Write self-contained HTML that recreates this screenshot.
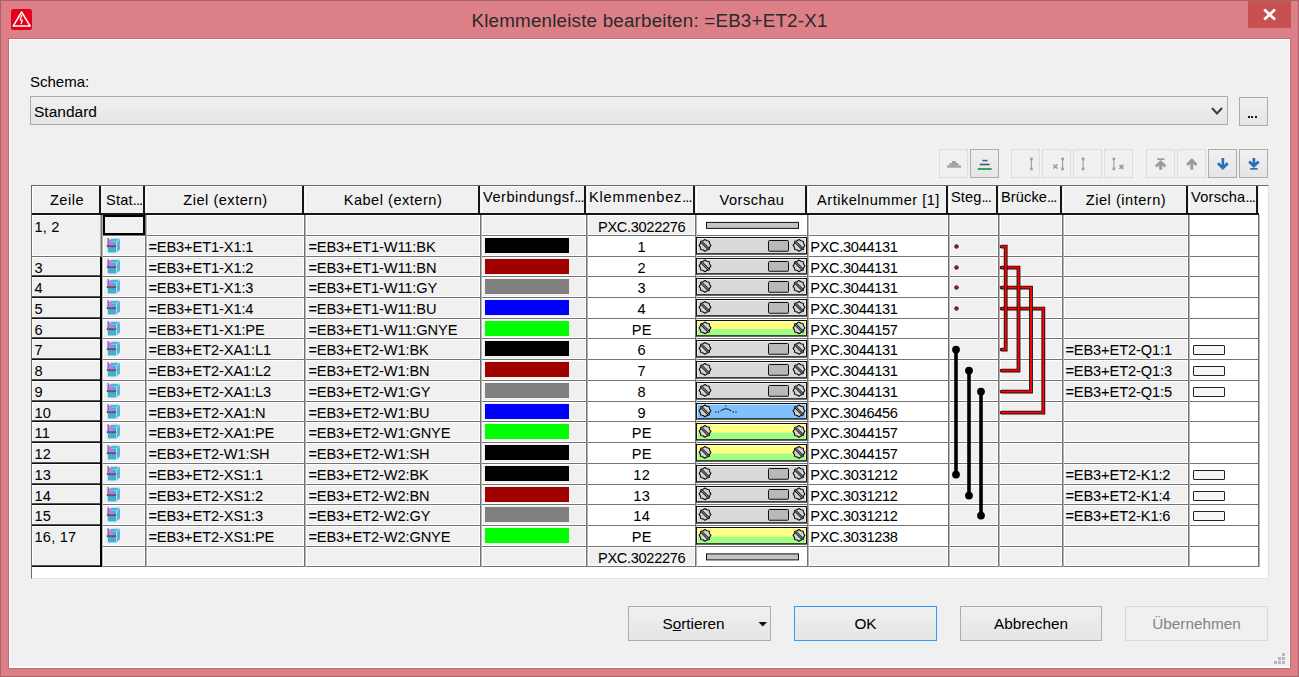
<!DOCTYPE html>
<html><head><meta charset="utf-8"><style>
*{margin:0;padding:0;box-sizing:border-box}
html,body{width:1299px;height:677px;overflow:hidden;background:#dd7f86;font-family:"Liberation Sans", sans-serif}
div{position:absolute}
.t{white-space:nowrap;line-height:1;-webkit-text-stroke:0.04px currentColor}
</style></head><body>

<div style="left:0px;top:0px;width:1299px;height:677px;border:1px solid #a9636a;"></div>
<svg style="position:absolute;left:11px;top:9px" width="21" height="21" viewBox="0 0 21 21">
<rect x="0" y="0" width="21" height="21" rx="2.5" fill="#e2001a"/>
<path d="M10.6 3.0 L19.2 17.1 L2.2 17.1 Z" fill="none" stroke="#fff" stroke-width="1.5" stroke-linejoin="round"/>
<path d="M10.8 6 L9.2 10.8 L11.3 11.4 L10 15.3" fill="none" stroke="#fff" stroke-width="1.2"/>
</svg>
<div class="t" style="left:349.5px;width:600px;text-align:center;top:12.09px;font-size:18.8px;color:#2a2a2a;letter-spacing:0.2px;-webkit-text-stroke:0;">Klemmenleiste bearbeiten: =EB3+ET2-X1</div>
<div style="left:1248px;top:1px;width:43px;height:27px;background:#c75050;"></div>
<svg style="position:absolute;left:1248px;top:1px" width="43" height="27" viewBox="0 0 43 27">
<path d="M16.2 8.6 L27 18.4 M27 8.6 L16.2 18.4" stroke="#fff" stroke-width="2.7"/>
</svg>
<div style="left:8px;top:38px;width:1283px;height:631px;border:1px solid #c96a73;background:#fff;"></div>
<div style="left:10px;top:40px;width:1279px;height:626px;background:#f0f0f0;"></div>
<div class="t" style="left:30px;top:74.20px;font-size:15px;color:#000;">Schema:</div>
<div style="left:30px;top:96px;width:1198px;height:29px;border:1px solid #acacac;background:linear-gradient(#f0f0f0,#e5e5e5);"></div>
<div class="t" style="left:34px;top:103.78px;font-size:15.5px;color:#000;">Standard</div>
<svg style="position:absolute;left:1210px;top:105px" width="14" height="12" viewBox="0 0 14 12">
<path d="M2 3 L7 8.5 L12 3" fill="none" stroke="#3c3c3c" stroke-width="2"/>
</svg>
<div style="left:1239px;top:97px;width:29px;height:29px;border:1px solid #acacac;background:linear-gradient(#f0f0f0,#e5e5e5);"></div>
<div style="left:1248.0px;top:116px;width:2px;height:2px;background:#1a1a1a;"></div>
<div style="left:1251.3px;top:116px;width:2px;height:2px;background:#1a1a1a;"></div>
<div style="left:1254.6px;top:116px;width:2px;height:2px;background:#1a1a1a;"></div>
<div style="left:939px;top:149px;width:29px;height:29px;border:1px solid #dcdcdc;background:#f0f0f0;"></div>
<div style="left:970px;top:149px;width:29px;height:29px;border:1px solid #adadad;background:linear-gradient(#f0f0f0,#e5e5e5);"></div>
<div style="left:1011px;top:149px;width:29px;height:29px;border:1px solid #dcdcdc;background:#f0f0f0;"></div>
<div style="left:1042px;top:149px;width:29px;height:29px;border:1px solid #dcdcdc;background:#f0f0f0;"></div>
<div style="left:1073px;top:149px;width:29px;height:29px;border:1px solid #dcdcdc;background:#f0f0f0;"></div>
<div style="left:1104px;top:149px;width:29px;height:29px;border:1px solid #dcdcdc;background:#f0f0f0;"></div>
<div style="left:1146px;top:149px;width:29px;height:29px;border:1px solid #dcdcdc;background:#f0f0f0;"></div>
<div style="left:1177px;top:149px;width:29px;height:29px;border:1px solid #dcdcdc;background:#f0f0f0;"></div>
<div style="left:1208px;top:149px;width:29px;height:29px;border:1px solid #adadad;background:linear-gradient(#f0f0f0,#e5e5e5);"></div>
<div style="left:1239px;top:149px;width:29px;height:29px;border:1px solid #adadad;background:linear-gradient(#f0f0f0,#e5e5e5);"></div>
<svg style="position:absolute;left:939px;top:149px" width="29" height="29" viewBox="0 0 29 29"><rect x="13" y="12" width="4" height="2.2" fill="#a0a0a0"/><rect x="10.5" y="14" width="9" height="2.6" fill="#a0a0a0"/><rect x="8" y="16.4" width="14" height="2.3" fill="#a0a0a0"/></svg>
<svg style="position:absolute;left:970px;top:149px" width="29" height="29" viewBox="0 0 29 29"><rect x="12.4" y="10.8" width="5.1" height="1.6" fill="#2b64b5"/><rect x="9.9" y="14.7" width="9.7" height="1.6" fill="#555"/><rect x="7.8" y="19" width="13.9" height="2" fill="#2fa36a"/></svg>
<svg style="position:absolute;left:1011px;top:149px" width="29" height="29" viewBox="0 0 29 29"><path d="M20.4 10 V20" stroke="#9c9c9c" stroke-width="1.1"/><rect x="19.099999999999998" y="8.6" width="2.6" height="2.6" fill="#9c9c9c"/><rect x="19.099999999999998" y="18.6" width="2.6" height="2.6" fill="#9c9c9c"/></svg>
<svg style="position:absolute;left:1042px;top:149px" width="29" height="29" viewBox="0 0 29 29"><path d="M20.6 10 V20" stroke="#9c9c9c" stroke-width="1.1"/><rect x="19.3" y="8.6" width="2.6" height="2.6" fill="#9c9c9c"/><rect x="19.3" y="18.6" width="2.6" height="2.6" fill="#9c9c9c"/><path d="M11.4 15.5 L15.4 19.5 M15.4 15.5 L11.4 19.5" stroke="#9c9c9c" stroke-width="1.7"/></svg>
<svg style="position:absolute;left:1073px;top:149px" width="29" height="29" viewBox="0 0 29 29"><path d="M10.1 10 V20" stroke="#9c9c9c" stroke-width="1.1"/><rect x="8.799999999999999" y="8.6" width="2.6" height="2.6" fill="#9c9c9c"/><rect x="8.799999999999999" y="18.6" width="2.6" height="2.6" fill="#9c9c9c"/></svg>
<svg style="position:absolute;left:1104px;top:149px" width="29" height="29" viewBox="0 0 29 29"><path d="M9.9 10 V20" stroke="#9c9c9c" stroke-width="1.1"/><rect x="8.6" y="8.6" width="2.6" height="2.6" fill="#9c9c9c"/><rect x="8.6" y="18.6" width="2.6" height="2.6" fill="#9c9c9c"/><path d="M15.5 15.8 L19.5 19.8 M19.5 15.8 L15.5 19.8" stroke="#9c9c9c" stroke-width="1.7"/></svg>
<svg style="position:absolute;left:1146px;top:149px" width="29" height="29" viewBox="0 0 29 29"><rect x="11.2" y="9.3" width="7.2" height="1.7" fill="#9a9a9a"/><path d="M14.7 13 V20.7" stroke="#9a9a9a" stroke-width="3"/><path d="M10 17.6 L14.7 12.9 L19.4 17.6" fill="none" stroke="#9a9a9a" stroke-width="2.8"/></svg>
<svg style="position:absolute;left:1177px;top:149px" width="29" height="29" viewBox="0 0 29 29"><path d="M14.8 10.5 V20.7" stroke="#9a9a9a" stroke-width="3"/><path d="M10.1 15.9 L14.8 11.2 L19.5 15.9" fill="none" stroke="#9a9a9a" stroke-width="2.8"/></svg>
<svg style="position:absolute;left:1208px;top:149px" width="29" height="29" viewBox="0 0 29 29"><path d="M14.85 9 V19" stroke="#2a6ebd" stroke-width="2.7"/><path d="M10 14.2 L14.85 19.1 L19.7 14.2" fill="none" stroke="#2a6ebd" stroke-width="2.8"/></svg>
<svg style="position:absolute;left:1239px;top:149px" width="29" height="29" viewBox="0 0 29 29"><path d="M14.9 9 V16.5" stroke="#2a6ebd" stroke-width="2.7"/><path d="M10.2 12.4 L14.9 17.1 L19.6 12.4" fill="none" stroke="#2a6ebd" stroke-width="2.8"/><rect x="11.2" y="19" width="7.4" height="1.7" fill="#2a6ebd"/></svg>
<div style="left:31px;top:185px;width:1238px;height:394px;background:#fff;border-top:1px solid #6a6a6a;border-left:1px solid #6a6a6a;border-right:1px solid #e3e3e3;border-bottom:1px solid #e3e3e3;"></div>
<div style="left:32px;top:186px;width:1227px;height:28px;background:#f0f0f0;"></div>
<div style="left:32px;top:186px;width:1px;height:27px;background:#fff;"></div>
<div style="left:32px;top:186px;width:68px;height:1px;background:#fff;"></div>
<div style="left:99px;top:186px;width:2px;height:28px;background:#161616;"></div>
<div class="t" style="left:-233.0px;width:600px;text-align:center;top:193.34px;font-size:14.6px;color:#000;letter-spacing:0.5px;">Zeile</div>
<div style="left:102px;top:186px;width:1px;height:27px;background:#fff;"></div>
<div style="left:102px;top:186px;width:42px;height:1px;background:#fff;"></div>
<div style="left:143px;top:186px;width:2px;height:28px;background:#161616;"></div>
<div class="t" style="left:106px;top:193.34px;font-size:14.6px;color:#000;letter-spacing:0.2px;">Stat<span style="letter-spacing:-0.9px">...</span></div>
<div style="left:146px;top:186px;width:1px;height:27px;background:#fff;"></div>
<div style="left:146px;top:186px;width:157px;height:1px;background:#fff;"></div>
<div style="left:302px;top:186px;width:2px;height:28px;background:#161616;"></div>
<div class="t" style="left:-74.5px;width:600px;text-align:center;top:193.34px;font-size:14.6px;color:#000;letter-spacing:0.5px;">Ziel (extern)</div>
<div style="left:305px;top:186px;width:1px;height:27px;background:#fff;"></div>
<div style="left:305px;top:186px;width:174px;height:1px;background:#fff;"></div>
<div style="left:478px;top:186px;width:2px;height:28px;background:#161616;"></div>
<div class="t" style="left:93.0px;width:600px;text-align:center;top:193.34px;font-size:14.6px;color:#000;letter-spacing:0.5px;">Kabel (extern)</div>
<div style="left:481px;top:186px;width:1px;height:27px;background:#fff;"></div>
<div style="left:481px;top:186px;width:104px;height:1px;background:#fff;"></div>
<div style="left:584px;top:186px;width:2px;height:28px;background:#161616;"></div>
<div class="t" style="left:483px;top:190.24px;font-size:14.6px;color:#000;letter-spacing:0.5px;">Verbindungsf<span style="letter-spacing:-0.9px">...</span></div>
<div style="left:587px;top:186px;width:1px;height:27px;background:#fff;"></div>
<div style="left:587px;top:186px;width:107px;height:1px;background:#fff;"></div>
<div style="left:693px;top:186px;width:2px;height:28px;background:#161616;"></div>
<div class="t" style="left:589px;top:190.24px;font-size:14.6px;color:#000;letter-spacing:0.8px;">Klemmenbez<span style="letter-spacing:-0.9px">...</span></div>
<div style="left:696px;top:186px;width:1px;height:27px;background:#fff;"></div>
<div style="left:696px;top:186px;width:110px;height:1px;background:#fff;"></div>
<div style="left:805px;top:186px;width:2px;height:28px;background:#161616;"></div>
<div class="t" style="left:452.0px;width:600px;text-align:center;top:193.34px;font-size:14.6px;color:#000;letter-spacing:0.5px;">Vorschau</div>
<div style="left:808px;top:186px;width:1px;height:27px;background:#fff;"></div>
<div style="left:808px;top:186px;width:139px;height:1px;background:#fff;"></div>
<div style="left:946px;top:186px;width:2px;height:28px;background:#161616;"></div>
<div class="t" style="left:578.5px;width:600px;text-align:center;top:193.34px;font-size:14.6px;color:#000;letter-spacing:0.5px;">Artikelnummer [1]</div>
<div style="left:949px;top:186px;width:1px;height:27px;background:#fff;"></div>
<div style="left:949px;top:186px;width:48px;height:1px;background:#fff;"></div>
<div style="left:996px;top:186px;width:2px;height:28px;background:#161616;"></div>
<div class="t" style="left:951px;top:190.24px;font-size:14.6px;color:#000;letter-spacing:0.1px;">Steg<span style="letter-spacing:-0.9px">...</span></div>
<div style="left:999px;top:186px;width:1px;height:27px;background:#fff;"></div>
<div style="left:999px;top:186px;width:62px;height:1px;background:#fff;"></div>
<div style="left:1060px;top:186px;width:2px;height:28px;background:#161616;"></div>
<div class="t" style="left:1001px;top:190.24px;font-size:14.6px;color:#000;letter-spacing:0.1px;">Brücke<span style="letter-spacing:-0.9px">...</span></div>
<div style="left:1063px;top:186px;width:1px;height:27px;background:#fff;"></div>
<div style="left:1063px;top:186px;width:124px;height:1px;background:#fff;"></div>
<div style="left:1186px;top:186px;width:2px;height:28px;background:#161616;"></div>
<div class="t" style="left:826.0px;width:600px;text-align:center;top:193.34px;font-size:14.6px;color:#000;letter-spacing:0.5px;">Ziel (intern)</div>
<div style="left:1189px;top:186px;width:1px;height:27px;background:#fff;"></div>
<div style="left:1189px;top:186px;width:68px;height:1px;background:#fff;"></div>
<div style="left:1256px;top:186px;width:2px;height:28px;background:#161616;"></div>
<div class="t" style="left:1191px;top:190.24px;font-size:14.6px;color:#000;letter-spacing:0.25px;">Vorscha<span style="letter-spacing:-0.9px">...</span></div>
<div style="left:32px;top:213px;width:1227px;height:2px;background:#161616;"></div>
<div style="left:101px;top:215px;width:1157px;height:351px;background:#fff;"></div>
<div style="left:104px;top:216px;width:40px;height:18px;background:#f0f0f0;"></div>
<div style="left:148px;top:216px;width:155px;height:18px;background:#f0f0f0;"></div>
<div style="left:307px;top:216px;width:172px;height:18px;background:#f0f0f0;"></div>
<div style="left:483px;top:216px;width:102px;height:18px;background:#f0f0f0;"></div>
<div style="left:589px;top:216px;width:105px;height:18px;background:#f0f0f0;"></div>
<div style="left:698px;top:216px;width:108px;height:18px;background:#fff;"></div>
<div style="left:810px;top:216px;width:137px;height:18px;background:#f0f0f0;"></div>
<div style="left:951px;top:216px;width:46px;height:18px;background:#f0f0f0;"></div>
<div style="left:1001px;top:216px;width:60px;height:18px;background:#f0f0f0;"></div>
<div style="left:1065px;top:216px;width:122px;height:18px;background:#f0f0f0;"></div>
<div style="left:1191px;top:216px;width:66px;height:18px;background:#fff;"></div>
<div style="left:104px;top:237px;width:40px;height:18px;background:#f0f0f0;"></div>
<div style="left:148px;top:237px;width:155px;height:18px;background:#f0f0f0;"></div>
<div style="left:307px;top:237px;width:172px;height:18px;background:#f0f0f0;"></div>
<div style="left:483px;top:237px;width:102px;height:18px;background:#f0f0f0;"></div>
<div style="left:589px;top:237px;width:105px;height:18px;background:#fff;"></div>
<div style="left:698px;top:237px;width:108px;height:18px;background:#fff;"></div>
<div style="left:810px;top:237px;width:137px;height:18px;background:#fff;"></div>
<div style="left:951px;top:237px;width:46px;height:18px;background:#f0f0f0;"></div>
<div style="left:1001px;top:237px;width:60px;height:18px;background:#f0f0f0;"></div>
<div style="left:1065px;top:237px;width:122px;height:18px;background:#f0f0f0;"></div>
<div style="left:1191px;top:237px;width:66px;height:18px;background:#fff;"></div>
<div style="left:104px;top:258px;width:40px;height:17px;background:#f0f0f0;"></div>
<div style="left:148px;top:258px;width:155px;height:17px;background:#f0f0f0;"></div>
<div style="left:307px;top:258px;width:172px;height:17px;background:#f0f0f0;"></div>
<div style="left:483px;top:258px;width:102px;height:17px;background:#f0f0f0;"></div>
<div style="left:589px;top:258px;width:105px;height:17px;background:#fff;"></div>
<div style="left:698px;top:258px;width:108px;height:17px;background:#fff;"></div>
<div style="left:810px;top:258px;width:137px;height:17px;background:#fff;"></div>
<div style="left:951px;top:258px;width:46px;height:17px;background:#f0f0f0;"></div>
<div style="left:1001px;top:258px;width:60px;height:17px;background:#f0f0f0;"></div>
<div style="left:1065px;top:258px;width:122px;height:17px;background:#f0f0f0;"></div>
<div style="left:1191px;top:258px;width:66px;height:17px;background:#fff;"></div>
<div style="left:104px;top:278px;width:40px;height:18px;background:#f0f0f0;"></div>
<div style="left:148px;top:278px;width:155px;height:18px;background:#f0f0f0;"></div>
<div style="left:307px;top:278px;width:172px;height:18px;background:#f0f0f0;"></div>
<div style="left:483px;top:278px;width:102px;height:18px;background:#f0f0f0;"></div>
<div style="left:589px;top:278px;width:105px;height:18px;background:#fff;"></div>
<div style="left:698px;top:278px;width:108px;height:18px;background:#fff;"></div>
<div style="left:810px;top:278px;width:137px;height:18px;background:#fff;"></div>
<div style="left:951px;top:278px;width:46px;height:18px;background:#f0f0f0;"></div>
<div style="left:1001px;top:278px;width:60px;height:18px;background:#f0f0f0;"></div>
<div style="left:1065px;top:278px;width:122px;height:18px;background:#f0f0f0;"></div>
<div style="left:1191px;top:278px;width:66px;height:18px;background:#fff;"></div>
<div style="left:104px;top:299px;width:40px;height:18px;background:#f0f0f0;"></div>
<div style="left:148px;top:299px;width:155px;height:18px;background:#f0f0f0;"></div>
<div style="left:307px;top:299px;width:172px;height:18px;background:#f0f0f0;"></div>
<div style="left:483px;top:299px;width:102px;height:18px;background:#f0f0f0;"></div>
<div style="left:589px;top:299px;width:105px;height:18px;background:#fff;"></div>
<div style="left:698px;top:299px;width:108px;height:18px;background:#fff;"></div>
<div style="left:810px;top:299px;width:137px;height:18px;background:#fff;"></div>
<div style="left:951px;top:299px;width:46px;height:18px;background:#f0f0f0;"></div>
<div style="left:1001px;top:299px;width:60px;height:18px;background:#f0f0f0;"></div>
<div style="left:1065px;top:299px;width:122px;height:18px;background:#f0f0f0;"></div>
<div style="left:1191px;top:299px;width:66px;height:18px;background:#fff;"></div>
<div style="left:104px;top:320px;width:40px;height:17px;background:#f0f0f0;"></div>
<div style="left:148px;top:320px;width:155px;height:17px;background:#f0f0f0;"></div>
<div style="left:307px;top:320px;width:172px;height:17px;background:#f0f0f0;"></div>
<div style="left:483px;top:320px;width:102px;height:17px;background:#f0f0f0;"></div>
<div style="left:589px;top:320px;width:105px;height:17px;background:#fff;"></div>
<div style="left:698px;top:320px;width:108px;height:17px;background:#fff;"></div>
<div style="left:810px;top:320px;width:137px;height:17px;background:#fff;"></div>
<div style="left:951px;top:320px;width:46px;height:17px;background:#f0f0f0;"></div>
<div style="left:1001px;top:320px;width:60px;height:17px;background:#f0f0f0;"></div>
<div style="left:1065px;top:320px;width:122px;height:17px;background:#f0f0f0;"></div>
<div style="left:1191px;top:320px;width:66px;height:17px;background:#fff;"></div>
<div style="left:104px;top:340px;width:40px;height:18px;background:#f0f0f0;"></div>
<div style="left:148px;top:340px;width:155px;height:18px;background:#f0f0f0;"></div>
<div style="left:307px;top:340px;width:172px;height:18px;background:#f0f0f0;"></div>
<div style="left:483px;top:340px;width:102px;height:18px;background:#f0f0f0;"></div>
<div style="left:589px;top:340px;width:105px;height:18px;background:#fff;"></div>
<div style="left:698px;top:340px;width:108px;height:18px;background:#fff;"></div>
<div style="left:810px;top:340px;width:137px;height:18px;background:#fff;"></div>
<div style="left:951px;top:340px;width:46px;height:18px;background:#f0f0f0;"></div>
<div style="left:1001px;top:340px;width:60px;height:18px;background:#f0f0f0;"></div>
<div style="left:1065px;top:340px;width:122px;height:18px;background:#f0f0f0;"></div>
<div style="left:1191px;top:340px;width:66px;height:18px;background:#fff;"></div>
<div style="left:104px;top:361px;width:40px;height:18px;background:#f0f0f0;"></div>
<div style="left:148px;top:361px;width:155px;height:18px;background:#f0f0f0;"></div>
<div style="left:307px;top:361px;width:172px;height:18px;background:#f0f0f0;"></div>
<div style="left:483px;top:361px;width:102px;height:18px;background:#f0f0f0;"></div>
<div style="left:589px;top:361px;width:105px;height:18px;background:#fff;"></div>
<div style="left:698px;top:361px;width:108px;height:18px;background:#fff;"></div>
<div style="left:810px;top:361px;width:137px;height:18px;background:#fff;"></div>
<div style="left:951px;top:361px;width:46px;height:18px;background:#f0f0f0;"></div>
<div style="left:1001px;top:361px;width:60px;height:18px;background:#f0f0f0;"></div>
<div style="left:1065px;top:361px;width:122px;height:18px;background:#f0f0f0;"></div>
<div style="left:1191px;top:361px;width:66px;height:18px;background:#fff;"></div>
<div style="left:104px;top:382px;width:40px;height:18px;background:#f0f0f0;"></div>
<div style="left:148px;top:382px;width:155px;height:18px;background:#f0f0f0;"></div>
<div style="left:307px;top:382px;width:172px;height:18px;background:#f0f0f0;"></div>
<div style="left:483px;top:382px;width:102px;height:18px;background:#f0f0f0;"></div>
<div style="left:589px;top:382px;width:105px;height:18px;background:#fff;"></div>
<div style="left:698px;top:382px;width:108px;height:18px;background:#fff;"></div>
<div style="left:810px;top:382px;width:137px;height:18px;background:#fff;"></div>
<div style="left:951px;top:382px;width:46px;height:18px;background:#f0f0f0;"></div>
<div style="left:1001px;top:382px;width:60px;height:18px;background:#f0f0f0;"></div>
<div style="left:1065px;top:382px;width:122px;height:18px;background:#f0f0f0;"></div>
<div style="left:1191px;top:382px;width:66px;height:18px;background:#fff;"></div>
<div style="left:104px;top:403px;width:40px;height:17px;background:#f0f0f0;"></div>
<div style="left:148px;top:403px;width:155px;height:17px;background:#f0f0f0;"></div>
<div style="left:307px;top:403px;width:172px;height:17px;background:#f0f0f0;"></div>
<div style="left:483px;top:403px;width:102px;height:17px;background:#f0f0f0;"></div>
<div style="left:589px;top:403px;width:105px;height:17px;background:#fff;"></div>
<div style="left:698px;top:403px;width:108px;height:17px;background:#fff;"></div>
<div style="left:810px;top:403px;width:137px;height:17px;background:#fff;"></div>
<div style="left:951px;top:403px;width:46px;height:17px;background:#f0f0f0;"></div>
<div style="left:1001px;top:403px;width:60px;height:17px;background:#f0f0f0;"></div>
<div style="left:1065px;top:403px;width:122px;height:17px;background:#f0f0f0;"></div>
<div style="left:1191px;top:403px;width:66px;height:17px;background:#fff;"></div>
<div style="left:104px;top:423px;width:40px;height:18px;background:#f0f0f0;"></div>
<div style="left:148px;top:423px;width:155px;height:18px;background:#f0f0f0;"></div>
<div style="left:307px;top:423px;width:172px;height:18px;background:#f0f0f0;"></div>
<div style="left:483px;top:423px;width:102px;height:18px;background:#f0f0f0;"></div>
<div style="left:589px;top:423px;width:105px;height:18px;background:#fff;"></div>
<div style="left:698px;top:423px;width:108px;height:18px;background:#fff;"></div>
<div style="left:810px;top:423px;width:137px;height:18px;background:#fff;"></div>
<div style="left:951px;top:423px;width:46px;height:18px;background:#f0f0f0;"></div>
<div style="left:1001px;top:423px;width:60px;height:18px;background:#f0f0f0;"></div>
<div style="left:1065px;top:423px;width:122px;height:18px;background:#f0f0f0;"></div>
<div style="left:1191px;top:423px;width:66px;height:18px;background:#fff;"></div>
<div style="left:104px;top:444px;width:40px;height:18px;background:#f0f0f0;"></div>
<div style="left:148px;top:444px;width:155px;height:18px;background:#f0f0f0;"></div>
<div style="left:307px;top:444px;width:172px;height:18px;background:#f0f0f0;"></div>
<div style="left:483px;top:444px;width:102px;height:18px;background:#f0f0f0;"></div>
<div style="left:589px;top:444px;width:105px;height:18px;background:#fff;"></div>
<div style="left:698px;top:444px;width:108px;height:18px;background:#fff;"></div>
<div style="left:810px;top:444px;width:137px;height:18px;background:#fff;"></div>
<div style="left:951px;top:444px;width:46px;height:18px;background:#f0f0f0;"></div>
<div style="left:1001px;top:444px;width:60px;height:18px;background:#f0f0f0;"></div>
<div style="left:1065px;top:444px;width:122px;height:18px;background:#f0f0f0;"></div>
<div style="left:1191px;top:444px;width:66px;height:18px;background:#fff;"></div>
<div style="left:104px;top:465px;width:40px;height:18px;background:#f0f0f0;"></div>
<div style="left:148px;top:465px;width:155px;height:18px;background:#f0f0f0;"></div>
<div style="left:307px;top:465px;width:172px;height:18px;background:#f0f0f0;"></div>
<div style="left:483px;top:465px;width:102px;height:18px;background:#f0f0f0;"></div>
<div style="left:589px;top:465px;width:105px;height:18px;background:#fff;"></div>
<div style="left:698px;top:465px;width:108px;height:18px;background:#fff;"></div>
<div style="left:810px;top:465px;width:137px;height:18px;background:#fff;"></div>
<div style="left:951px;top:465px;width:46px;height:18px;background:#f0f0f0;"></div>
<div style="left:1001px;top:465px;width:60px;height:18px;background:#f0f0f0;"></div>
<div style="left:1065px;top:465px;width:122px;height:18px;background:#f0f0f0;"></div>
<div style="left:1191px;top:465px;width:66px;height:18px;background:#fff;"></div>
<div style="left:104px;top:486px;width:40px;height:17px;background:#f0f0f0;"></div>
<div style="left:148px;top:486px;width:155px;height:17px;background:#f0f0f0;"></div>
<div style="left:307px;top:486px;width:172px;height:17px;background:#f0f0f0;"></div>
<div style="left:483px;top:486px;width:102px;height:17px;background:#f0f0f0;"></div>
<div style="left:589px;top:486px;width:105px;height:17px;background:#fff;"></div>
<div style="left:698px;top:486px;width:108px;height:17px;background:#fff;"></div>
<div style="left:810px;top:486px;width:137px;height:17px;background:#fff;"></div>
<div style="left:951px;top:486px;width:46px;height:17px;background:#f0f0f0;"></div>
<div style="left:1001px;top:486px;width:60px;height:17px;background:#f0f0f0;"></div>
<div style="left:1065px;top:486px;width:122px;height:17px;background:#f0f0f0;"></div>
<div style="left:1191px;top:486px;width:66px;height:17px;background:#fff;"></div>
<div style="left:104px;top:506px;width:40px;height:18px;background:#f0f0f0;"></div>
<div style="left:148px;top:506px;width:155px;height:18px;background:#f0f0f0;"></div>
<div style="left:307px;top:506px;width:172px;height:18px;background:#f0f0f0;"></div>
<div style="left:483px;top:506px;width:102px;height:18px;background:#f0f0f0;"></div>
<div style="left:589px;top:506px;width:105px;height:18px;background:#fff;"></div>
<div style="left:698px;top:506px;width:108px;height:18px;background:#fff;"></div>
<div style="left:810px;top:506px;width:137px;height:18px;background:#fff;"></div>
<div style="left:951px;top:506px;width:46px;height:18px;background:#f0f0f0;"></div>
<div style="left:1001px;top:506px;width:60px;height:18px;background:#f0f0f0;"></div>
<div style="left:1065px;top:506px;width:122px;height:18px;background:#f0f0f0;"></div>
<div style="left:1191px;top:506px;width:66px;height:18px;background:#fff;"></div>
<div style="left:104px;top:527px;width:40px;height:18px;background:#f0f0f0;"></div>
<div style="left:148px;top:527px;width:155px;height:18px;background:#f0f0f0;"></div>
<div style="left:307px;top:527px;width:172px;height:18px;background:#f0f0f0;"></div>
<div style="left:483px;top:527px;width:102px;height:18px;background:#f0f0f0;"></div>
<div style="left:589px;top:527px;width:105px;height:18px;background:#fff;"></div>
<div style="left:698px;top:527px;width:108px;height:18px;background:#fff;"></div>
<div style="left:810px;top:527px;width:137px;height:18px;background:#fff;"></div>
<div style="left:951px;top:527px;width:46px;height:18px;background:#f0f0f0;"></div>
<div style="left:1001px;top:527px;width:60px;height:18px;background:#f0f0f0;"></div>
<div style="left:1065px;top:527px;width:122px;height:18px;background:#f0f0f0;"></div>
<div style="left:1191px;top:527px;width:66px;height:18px;background:#fff;"></div>
<div style="left:104px;top:548px;width:40px;height:17px;background:#f0f0f0;"></div>
<div style="left:148px;top:548px;width:155px;height:17px;background:#f0f0f0;"></div>
<div style="left:307px;top:548px;width:172px;height:17px;background:#f0f0f0;"></div>
<div style="left:483px;top:548px;width:102px;height:17px;background:#f0f0f0;"></div>
<div style="left:589px;top:548px;width:105px;height:17px;background:#f0f0f0;"></div>
<div style="left:698px;top:548px;width:108px;height:17px;background:#fff;"></div>
<div style="left:810px;top:548px;width:137px;height:17px;background:#f0f0f0;"></div>
<div style="left:951px;top:548px;width:46px;height:17px;background:#f0f0f0;"></div>
<div style="left:1001px;top:548px;width:60px;height:17px;background:#f0f0f0;"></div>
<div style="left:1065px;top:548px;width:122px;height:17px;background:#f0f0f0;"></div>
<div style="left:1191px;top:548px;width:66px;height:17px;background:#fff;"></div>
<div style="left:101px;top:235px;width:1158px;height:1px;background:#737373;"></div>
<div style="left:101px;top:256px;width:1158px;height:1px;background:#737373;"></div>
<div style="left:101px;top:276px;width:1158px;height:1px;background:#737373;"></div>
<div style="left:101px;top:297px;width:1158px;height:1px;background:#737373;"></div>
<div style="left:101px;top:318px;width:1158px;height:1px;background:#737373;"></div>
<div style="left:101px;top:338px;width:1158px;height:1px;background:#737373;"></div>
<div style="left:101px;top:359px;width:1158px;height:1px;background:#737373;"></div>
<div style="left:101px;top:380px;width:1158px;height:1px;background:#737373;"></div>
<div style="left:101px;top:401px;width:1158px;height:1px;background:#737373;"></div>
<div style="left:101px;top:421px;width:1158px;height:1px;background:#737373;"></div>
<div style="left:101px;top:442px;width:1158px;height:1px;background:#737373;"></div>
<div style="left:101px;top:463px;width:1158px;height:1px;background:#737373;"></div>
<div style="left:101px;top:484px;width:1158px;height:1px;background:#737373;"></div>
<div style="left:101px;top:504px;width:1158px;height:1px;background:#737373;"></div>
<div style="left:101px;top:525px;width:1158px;height:1px;background:#737373;"></div>
<div style="left:101px;top:546px;width:1158px;height:1px;background:#737373;"></div>
<div style="left:101px;top:566px;width:1158px;height:1px;background:#737373;"></div>
<div style="left:101px;top:215px;width:1px;height:352px;background:#737373;"></div>
<div style="left:102px;top:215px;width:1px;height:352px;background:#b4b4b4;"></div>
<div style="left:145px;top:215px;width:1px;height:352px;background:#737373;"></div>
<div style="left:146px;top:215px;width:1px;height:352px;background:#b4b4b4;"></div>
<div style="left:304px;top:215px;width:1px;height:352px;background:#737373;"></div>
<div style="left:305px;top:215px;width:1px;height:352px;background:#b4b4b4;"></div>
<div style="left:480px;top:215px;width:1px;height:352px;background:#737373;"></div>
<div style="left:481px;top:215px;width:1px;height:352px;background:#b4b4b4;"></div>
<div style="left:586px;top:215px;width:1px;height:352px;background:#737373;"></div>
<div style="left:587px;top:215px;width:1px;height:352px;background:#b4b4b4;"></div>
<div style="left:695px;top:215px;width:1px;height:352px;background:#737373;"></div>
<div style="left:696px;top:215px;width:1px;height:352px;background:#b4b4b4;"></div>
<div style="left:807px;top:215px;width:1px;height:352px;background:#737373;"></div>
<div style="left:808px;top:215px;width:1px;height:352px;background:#b4b4b4;"></div>
<div style="left:948px;top:215px;width:1px;height:352px;background:#737373;"></div>
<div style="left:949px;top:215px;width:1px;height:352px;background:#b4b4b4;"></div>
<div style="left:998px;top:215px;width:1px;height:352px;background:#737373;"></div>
<div style="left:999px;top:215px;width:1px;height:352px;background:#b4b4b4;"></div>
<div style="left:1062px;top:215px;width:1px;height:352px;background:#737373;"></div>
<div style="left:1063px;top:215px;width:1px;height:352px;background:#b4b4b4;"></div>
<div style="left:1188px;top:215px;width:1px;height:352px;background:#737373;"></div>
<div style="left:1189px;top:215px;width:1px;height:352px;background:#b4b4b4;"></div>
<div style="left:1258px;top:215px;width:1px;height:352px;background:#737373;"></div>
<div style="left:1259px;top:215px;width:1px;height:352px;background:#b4b4b4;"></div>
<div style="left:32px;top:215px;width:69px;height:40px;background:#f0f0f0;"></div>
<div style="left:32px;top:215px;width:68px;height:1px;background:#fff;"></div>
<div style="left:32px;top:215px;width:1px;height:40px;background:#fff;"></div>
<div style="left:32px;top:256px;width:69px;height:1px;background:#737373;"></div>
<div style="left:100px;top:215px;width:1px;height:41px;background:#b4b4b4;"></div>
<div style="left:101px;top:215px;width:1px;height:41px;background:#737373;"></div>
<div class="t" style="left:34.5px;top:219.54px;font-size:14.6px;color:#000;letter-spacing:0.2px;">1, 2</div>
<div style="left:32px;top:257px;width:69px;height:18px;background:#f0f0f0;"></div>
<div style="left:32px;top:257px;width:68px;height:1px;background:#fff;"></div>
<div style="left:32px;top:257px;width:1px;height:18px;background:#fff;"></div>
<div style="left:32px;top:275px;width:70px;height:1px;background:#555;"></div>
<div style="left:32px;top:276px;width:70px;height:1px;background:#111;"></div>
<div style="left:100px;top:257px;width:2px;height:20px;background:#000;"></div>
<div class="t" style="left:34.5px;top:261.04px;font-size:14.6px;color:#000;letter-spacing:0.2px;">3</div>
<div style="left:32px;top:277px;width:69px;height:19px;background:#f0f0f0;"></div>
<div style="left:32px;top:277px;width:68px;height:1px;background:#fff;"></div>
<div style="left:32px;top:277px;width:1px;height:19px;background:#fff;"></div>
<div style="left:32px;top:296px;width:70px;height:1px;background:#555;"></div>
<div style="left:32px;top:297px;width:70px;height:1px;background:#111;"></div>
<div style="left:100px;top:277px;width:2px;height:21px;background:#000;"></div>
<div class="t" style="left:34.5px;top:281.04px;font-size:14.6px;color:#000;letter-spacing:0.2px;">4</div>
<div style="left:32px;top:298px;width:69px;height:19px;background:#f0f0f0;"></div>
<div style="left:32px;top:298px;width:68px;height:1px;background:#fff;"></div>
<div style="left:32px;top:298px;width:1px;height:19px;background:#fff;"></div>
<div style="left:32px;top:317px;width:70px;height:1px;background:#555;"></div>
<div style="left:32px;top:318px;width:70px;height:1px;background:#111;"></div>
<div style="left:100px;top:298px;width:2px;height:21px;background:#000;"></div>
<div class="t" style="left:34.5px;top:302.04px;font-size:14.6px;color:#000;letter-spacing:0.2px;">5</div>
<div style="left:32px;top:319px;width:69px;height:18px;background:#f0f0f0;"></div>
<div style="left:32px;top:319px;width:68px;height:1px;background:#fff;"></div>
<div style="left:32px;top:319px;width:1px;height:18px;background:#fff;"></div>
<div style="left:32px;top:337px;width:70px;height:1px;background:#555;"></div>
<div style="left:32px;top:338px;width:70px;height:1px;background:#111;"></div>
<div style="left:100px;top:319px;width:2px;height:20px;background:#000;"></div>
<div class="t" style="left:34.5px;top:323.04px;font-size:14.6px;color:#000;letter-spacing:0.2px;">6</div>
<div style="left:32px;top:339px;width:69px;height:19px;background:#f0f0f0;"></div>
<div style="left:32px;top:339px;width:68px;height:1px;background:#fff;"></div>
<div style="left:32px;top:339px;width:1px;height:19px;background:#fff;"></div>
<div style="left:32px;top:358px;width:70px;height:1px;background:#555;"></div>
<div style="left:32px;top:359px;width:70px;height:1px;background:#111;"></div>
<div style="left:100px;top:339px;width:2px;height:21px;background:#000;"></div>
<div class="t" style="left:34.5px;top:343.04px;font-size:14.6px;color:#000;letter-spacing:0.2px;">7</div>
<div style="left:32px;top:360px;width:69px;height:19px;background:#f0f0f0;"></div>
<div style="left:32px;top:360px;width:68px;height:1px;background:#fff;"></div>
<div style="left:32px;top:360px;width:1px;height:19px;background:#fff;"></div>
<div style="left:32px;top:379px;width:70px;height:1px;background:#555;"></div>
<div style="left:32px;top:380px;width:70px;height:1px;background:#111;"></div>
<div style="left:100px;top:360px;width:2px;height:21px;background:#000;"></div>
<div class="t" style="left:34.5px;top:364.04px;font-size:14.6px;color:#000;letter-spacing:0.2px;">8</div>
<div style="left:32px;top:381px;width:69px;height:19px;background:#f0f0f0;"></div>
<div style="left:32px;top:381px;width:68px;height:1px;background:#fff;"></div>
<div style="left:32px;top:381px;width:1px;height:19px;background:#fff;"></div>
<div style="left:32px;top:400px;width:70px;height:1px;background:#555;"></div>
<div style="left:32px;top:401px;width:70px;height:1px;background:#111;"></div>
<div style="left:100px;top:381px;width:2px;height:21px;background:#000;"></div>
<div class="t" style="left:34.5px;top:385.04px;font-size:14.6px;color:#000;letter-spacing:0.2px;">9</div>
<div style="left:32px;top:402px;width:69px;height:18px;background:#f0f0f0;"></div>
<div style="left:32px;top:402px;width:68px;height:1px;background:#fff;"></div>
<div style="left:32px;top:402px;width:1px;height:18px;background:#fff;"></div>
<div style="left:32px;top:420px;width:70px;height:1px;background:#555;"></div>
<div style="left:32px;top:421px;width:70px;height:1px;background:#111;"></div>
<div style="left:100px;top:402px;width:2px;height:20px;background:#000;"></div>
<div class="t" style="left:34.5px;top:406.04px;font-size:14.6px;color:#000;letter-spacing:0.2px;">10</div>
<div style="left:32px;top:422px;width:69px;height:19px;background:#f0f0f0;"></div>
<div style="left:32px;top:422px;width:68px;height:1px;background:#fff;"></div>
<div style="left:32px;top:422px;width:1px;height:19px;background:#fff;"></div>
<div style="left:32px;top:441px;width:70px;height:1px;background:#555;"></div>
<div style="left:32px;top:442px;width:70px;height:1px;background:#111;"></div>
<div style="left:100px;top:422px;width:2px;height:21px;background:#000;"></div>
<div class="t" style="left:34.5px;top:426.04px;font-size:14.6px;color:#000;letter-spacing:0.2px;">11</div>
<div style="left:32px;top:443px;width:69px;height:19px;background:#f0f0f0;"></div>
<div style="left:32px;top:443px;width:68px;height:1px;background:#fff;"></div>
<div style="left:32px;top:443px;width:1px;height:19px;background:#fff;"></div>
<div style="left:32px;top:462px;width:70px;height:1px;background:#555;"></div>
<div style="left:32px;top:463px;width:70px;height:1px;background:#111;"></div>
<div style="left:100px;top:443px;width:2px;height:21px;background:#000;"></div>
<div class="t" style="left:34.5px;top:447.04px;font-size:14.6px;color:#000;letter-spacing:0.2px;">12</div>
<div style="left:32px;top:464px;width:69px;height:19px;background:#f0f0f0;"></div>
<div style="left:32px;top:464px;width:68px;height:1px;background:#fff;"></div>
<div style="left:32px;top:464px;width:1px;height:19px;background:#fff;"></div>
<div style="left:32px;top:483px;width:70px;height:1px;background:#555;"></div>
<div style="left:32px;top:484px;width:70px;height:1px;background:#111;"></div>
<div style="left:100px;top:464px;width:2px;height:21px;background:#000;"></div>
<div class="t" style="left:34.5px;top:468.04px;font-size:14.6px;color:#000;letter-spacing:0.2px;">13</div>
<div style="left:32px;top:485px;width:69px;height:18px;background:#f0f0f0;"></div>
<div style="left:32px;top:485px;width:68px;height:1px;background:#fff;"></div>
<div style="left:32px;top:485px;width:1px;height:18px;background:#fff;"></div>
<div style="left:32px;top:503px;width:70px;height:1px;background:#555;"></div>
<div style="left:32px;top:504px;width:70px;height:1px;background:#111;"></div>
<div style="left:100px;top:485px;width:2px;height:20px;background:#000;"></div>
<div class="t" style="left:34.5px;top:489.04px;font-size:14.6px;color:#000;letter-spacing:0.2px;">14</div>
<div style="left:32px;top:505px;width:69px;height:19px;background:#f0f0f0;"></div>
<div style="left:32px;top:505px;width:68px;height:1px;background:#fff;"></div>
<div style="left:32px;top:505px;width:1px;height:19px;background:#fff;"></div>
<div style="left:32px;top:524px;width:70px;height:1px;background:#555;"></div>
<div style="left:32px;top:525px;width:70px;height:1px;background:#111;"></div>
<div style="left:100px;top:505px;width:2px;height:21px;background:#000;"></div>
<div class="t" style="left:34.5px;top:509.04px;font-size:14.6px;color:#000;letter-spacing:0.2px;">15</div>
<div style="left:32px;top:526px;width:69px;height:39px;background:#f0f0f0;"></div>
<div style="left:32px;top:526px;width:68px;height:1px;background:#fff;"></div>
<div style="left:32px;top:526px;width:1px;height:39px;background:#fff;"></div>
<div style="left:32px;top:565px;width:70px;height:1px;background:#555;"></div>
<div style="left:32px;top:566px;width:70px;height:1px;background:#111;"></div>
<div style="left:100px;top:526px;width:2px;height:41px;background:#000;"></div>
<div class="t" style="left:34.5px;top:530.04px;font-size:14.6px;color:#000;letter-spacing:0.2px;">16, 17</div>
<div style="left:103px;top:215px;width:42px;height:20px;border:2px solid #000;"></div>
<div class="t" style="left:341.70000000000005px;width:600px;text-align:center;top:219.54px;font-size:14.6px;color:#000;letter-spacing:-0.32px;">PXC.3022276</div>
<svg style="position:absolute;left:696px;top:216px" width="112" height="18" viewBox="0 0 112 18"><rect x="10.5" y="6.4" width="92" height="6" fill="#c4c4c4" stroke="#111" stroke-width="1"/></svg>
<svg style="position:absolute;left:104px;top:236px" width="20" height="20" viewBox="0 0 20 20">
<path d="M3.8 5.6 L12.4 5.6 L16 2.8 L7.4 2.8 Z" fill="#4fb3d9"/>
<path d="M12.4 5.6 L16 2.8 L16 13.5 L12.4 16.5 Z" fill="#55b5da"/>
<rect x="3.8" y="5.6" width="8.6" height="10.9" fill="#45acd4"/>
<path d="M12.4 5.8 L15.8 3 M12.6 5.8 V16.3" stroke="#d8f0f8" stroke-width="0.7" fill="none"/>
<path d="M4 2 L4 10 L11.5 10 Z" fill="#d070f0"/>
<path d="M4 2 L4 10" stroke="#6a3a80" stroke-width="0.8"/>
<circle cx="6.3" cy="7.4" r="0.9" fill="#40c0c8"/>
<rect x="2.8" y="9.4" width="9.4" height="1.7" fill="#4a4040"/><path d="M4.3 10.25 h1 M6.6 10.25 h1 M8.9 10.25 h1 M11.1 10.25 h0.8" stroke="#b8a8b8" stroke-width="0.7"/>
</svg>
<div class="t" style="left:148.4px;top:240.04px;font-size:14.6px;color:#000;letter-spacing:-0.1px;">=EB3+ET1-X1:1</div>
<div class="t" style="left:308.4px;top:240.04px;font-size:14.6px;color:#000;letter-spacing:-0.1px;">=EB3+ET1-W11:BK</div>
<div style="left:485px;top:238px;width:84px;height:15px;background:#000000;"></div>
<div class="t" style="left:341.70000000000005px;width:600px;text-align:center;top:240.04px;font-size:14.6px;color:#000;letter-spacing:0.2px;">1</div>
<svg style="position:absolute;left:696px;top:237px" width="112" height="18" viewBox="0 0 112 18"><rect x="1" y="1" width="109" height="16" fill="#d9d9d9"/><path d="M1.5 16 V1.5 H109.5 V16" fill="none" stroke="#fff" stroke-opacity="0.55" stroke-width="1"/><rect x="0.5" y="0.5" width="110" height="16.4" fill="none" stroke="#111" stroke-width="1"/><path d="M0.5 16.8 H110.5" stroke="#333" stroke-width="1.2"/><rect x="72.5" y="3.5" width="20" height="10.8" rx="1" fill="#b9b9b9" stroke="#111" stroke-width="1"/><path d="M73 14.4 H92" stroke="#444" stroke-width="1"/><polygon points="9.00,2.50 10.91,3.78 13.17,4.23 13.62,6.49 14.90,8.40 13.62,10.31 13.17,12.57 10.91,13.02 9.00,14.30 7.09,13.02 4.83,12.57 4.38,10.31 3.10,8.40 4.38,6.49 4.83,4.23 7.09,3.78" fill="#d2d2d2" stroke="#111" stroke-width="1.1" stroke-linejoin="round"/><path d="M5.40 4.80 L12.60 12.00" stroke="#222" stroke-width="2.6"/><path d="M5.60 5.00 L12.40 11.80" stroke="#ccc" stroke-width="0.7"/><polygon points="103.00,2.50 104.91,3.78 107.17,4.23 107.62,6.49 108.90,8.40 107.62,10.31 107.17,12.57 104.91,13.02 103.00,14.30 101.09,13.02 98.83,12.57 98.38,10.31 97.10,8.40 98.38,6.49 98.83,4.23 101.09,3.78" fill="#d2d2d2" stroke="#111" stroke-width="1.1" stroke-linejoin="round"/><path d="M99.40 4.80 L106.60 12.00" stroke="#222" stroke-width="2.6"/><path d="M99.60 5.00 L106.40 11.80" stroke="#ccc" stroke-width="0.7"/></svg>
<div class="t" style="left:810.3px;top:240.04px;font-size:14.6px;color:#000;letter-spacing:-0.32px;">PXC.3044131</div>
<svg style="position:absolute;left:952px;top:242px" width="9" height="9"><circle cx="4.5" cy="4.5" r="1.8" fill="#f00000" stroke="#1a2020" stroke-width="0.9"/></svg>
<svg style="position:absolute;left:104px;top:257px" width="20" height="20" viewBox="0 0 20 20">
<path d="M3.8 5.6 L12.4 5.6 L16 2.8 L7.4 2.8 Z" fill="#4fb3d9"/>
<path d="M12.4 5.6 L16 2.8 L16 13.5 L12.4 16.5 Z" fill="#55b5da"/>
<rect x="3.8" y="5.6" width="8.6" height="10.9" fill="#45acd4"/>
<path d="M12.4 5.8 L15.8 3 M12.6 5.8 V16.3" stroke="#d8f0f8" stroke-width="0.7" fill="none"/>
<path d="M4 2 L4 10 L11.5 10 Z" fill="#d070f0"/>
<path d="M4 2 L4 10" stroke="#6a3a80" stroke-width="0.8"/>
<circle cx="6.3" cy="7.4" r="0.9" fill="#40c0c8"/>
<rect x="2.8" y="9.4" width="9.4" height="1.7" fill="#4a4040"/><path d="M4.3 10.25 h1 M6.6 10.25 h1 M8.9 10.25 h1 M11.1 10.25 h0.8" stroke="#b8a8b8" stroke-width="0.7"/>
</svg>
<div class="t" style="left:148.4px;top:261.04px;font-size:14.6px;color:#000;letter-spacing:-0.1px;">=EB3+ET1-X1:2</div>
<div class="t" style="left:308.4px;top:261.04px;font-size:14.6px;color:#000;letter-spacing:-0.1px;">=EB3+ET1-W11:BN</div>
<div style="left:485px;top:259px;width:84px;height:15px;background:#a00000;"></div>
<div class="t" style="left:341.70000000000005px;width:600px;text-align:center;top:261.04px;font-size:14.6px;color:#000;letter-spacing:0.2px;">2</div>
<svg style="position:absolute;left:696px;top:258px" width="112" height="17" viewBox="0 0 112 17"><rect x="1" y="1" width="109" height="15" fill="#d9d9d9"/><path d="M1.5 15 V1.5 H109.5 V15" fill="none" stroke="#fff" stroke-opacity="0.55" stroke-width="1"/><rect x="0.5" y="0.5" width="110" height="15.4" fill="none" stroke="#111" stroke-width="1"/><path d="M0.5 15.8 H110.5" stroke="#333" stroke-width="1.2"/><rect x="72.5" y="3.5" width="20" height="9.8" rx="1" fill="#b9b9b9" stroke="#111" stroke-width="1"/><path d="M73 13.4 H92" stroke="#444" stroke-width="1"/><polygon points="9.00,2.00 10.91,3.28 13.17,3.73 13.62,5.99 14.90,7.90 13.62,9.81 13.17,12.07 10.91,12.52 9.00,13.80 7.09,12.52 4.83,12.07 4.38,9.81 3.10,7.90 4.38,5.99 4.83,3.73 7.09,3.28" fill="#d2d2d2" stroke="#111" stroke-width="1.1" stroke-linejoin="round"/><path d="M5.40 4.30 L12.60 11.50" stroke="#222" stroke-width="2.6"/><path d="M5.60 4.50 L12.40 11.30" stroke="#ccc" stroke-width="0.7"/><polygon points="103.00,2.00 104.91,3.28 107.17,3.73 107.62,5.99 108.90,7.90 107.62,9.81 107.17,12.07 104.91,12.52 103.00,13.80 101.09,12.52 98.83,12.07 98.38,9.81 97.10,7.90 98.38,5.99 98.83,3.73 101.09,3.28" fill="#d2d2d2" stroke="#111" stroke-width="1.1" stroke-linejoin="round"/><path d="M99.40 4.30 L106.60 11.50" stroke="#222" stroke-width="2.6"/><path d="M99.60 4.50 L106.40 11.30" stroke="#ccc" stroke-width="0.7"/></svg>
<div class="t" style="left:810.3px;top:261.04px;font-size:14.6px;color:#000;letter-spacing:-0.32px;">PXC.3044131</div>
<svg style="position:absolute;left:952px;top:263px" width="9" height="9"><circle cx="4.5" cy="4.5" r="1.8" fill="#f00000" stroke="#1a2020" stroke-width="0.9"/></svg>
<svg style="position:absolute;left:104px;top:277px" width="20" height="20" viewBox="0 0 20 20">
<path d="M3.8 5.6 L12.4 5.6 L16 2.8 L7.4 2.8 Z" fill="#4fb3d9"/>
<path d="M12.4 5.6 L16 2.8 L16 13.5 L12.4 16.5 Z" fill="#55b5da"/>
<rect x="3.8" y="5.6" width="8.6" height="10.9" fill="#45acd4"/>
<path d="M12.4 5.8 L15.8 3 M12.6 5.8 V16.3" stroke="#d8f0f8" stroke-width="0.7" fill="none"/>
<path d="M4 2 L4 10 L11.5 10 Z" fill="#d070f0"/>
<path d="M4 2 L4 10" stroke="#6a3a80" stroke-width="0.8"/>
<circle cx="6.3" cy="7.4" r="0.9" fill="#40c0c8"/>
<rect x="2.8" y="9.4" width="9.4" height="1.7" fill="#4a4040"/><path d="M4.3 10.25 h1 M6.6 10.25 h1 M8.9 10.25 h1 M11.1 10.25 h0.8" stroke="#b8a8b8" stroke-width="0.7"/>
</svg>
<div class="t" style="left:148.4px;top:281.04px;font-size:14.6px;color:#000;letter-spacing:-0.1px;">=EB3+ET1-X1:3</div>
<div class="t" style="left:308.4px;top:281.04px;font-size:14.6px;color:#000;letter-spacing:-0.1px;">=EB3+ET1-W11:GY</div>
<div style="left:485px;top:279px;width:84px;height:15px;background:#808080;"></div>
<div class="t" style="left:341.70000000000005px;width:600px;text-align:center;top:281.04px;font-size:14.6px;color:#000;letter-spacing:0.2px;">3</div>
<svg style="position:absolute;left:696px;top:278px" width="112" height="18" viewBox="0 0 112 18"><rect x="1" y="1" width="109" height="16" fill="#d9d9d9"/><path d="M1.5 16 V1.5 H109.5 V16" fill="none" stroke="#fff" stroke-opacity="0.55" stroke-width="1"/><rect x="0.5" y="0.5" width="110" height="16.4" fill="none" stroke="#111" stroke-width="1"/><path d="M0.5 16.8 H110.5" stroke="#333" stroke-width="1.2"/><rect x="72.5" y="3.5" width="20" height="10.8" rx="1" fill="#b9b9b9" stroke="#111" stroke-width="1"/><path d="M73 14.4 H92" stroke="#444" stroke-width="1"/><polygon points="9.00,2.50 10.91,3.78 13.17,4.23 13.62,6.49 14.90,8.40 13.62,10.31 13.17,12.57 10.91,13.02 9.00,14.30 7.09,13.02 4.83,12.57 4.38,10.31 3.10,8.40 4.38,6.49 4.83,4.23 7.09,3.78" fill="#d2d2d2" stroke="#111" stroke-width="1.1" stroke-linejoin="round"/><path d="M5.40 4.80 L12.60 12.00" stroke="#222" stroke-width="2.6"/><path d="M5.60 5.00 L12.40 11.80" stroke="#ccc" stroke-width="0.7"/><polygon points="103.00,2.50 104.91,3.78 107.17,4.23 107.62,6.49 108.90,8.40 107.62,10.31 107.17,12.57 104.91,13.02 103.00,14.30 101.09,13.02 98.83,12.57 98.38,10.31 97.10,8.40 98.38,6.49 98.83,4.23 101.09,3.78" fill="#d2d2d2" stroke="#111" stroke-width="1.1" stroke-linejoin="round"/><path d="M99.40 4.80 L106.60 12.00" stroke="#222" stroke-width="2.6"/><path d="M99.60 5.00 L106.40 11.80" stroke="#ccc" stroke-width="0.7"/></svg>
<div class="t" style="left:810.3px;top:281.04px;font-size:14.6px;color:#000;letter-spacing:-0.32px;">PXC.3044131</div>
<svg style="position:absolute;left:952px;top:283px" width="9" height="9"><circle cx="4.5" cy="4.5" r="1.8" fill="#f00000" stroke="#1a2020" stroke-width="0.9"/></svg>
<svg style="position:absolute;left:104px;top:298px" width="20" height="20" viewBox="0 0 20 20">
<path d="M3.8 5.6 L12.4 5.6 L16 2.8 L7.4 2.8 Z" fill="#4fb3d9"/>
<path d="M12.4 5.6 L16 2.8 L16 13.5 L12.4 16.5 Z" fill="#55b5da"/>
<rect x="3.8" y="5.6" width="8.6" height="10.9" fill="#45acd4"/>
<path d="M12.4 5.8 L15.8 3 M12.6 5.8 V16.3" stroke="#d8f0f8" stroke-width="0.7" fill="none"/>
<path d="M4 2 L4 10 L11.5 10 Z" fill="#d070f0"/>
<path d="M4 2 L4 10" stroke="#6a3a80" stroke-width="0.8"/>
<circle cx="6.3" cy="7.4" r="0.9" fill="#40c0c8"/>
<rect x="2.8" y="9.4" width="9.4" height="1.7" fill="#4a4040"/><path d="M4.3 10.25 h1 M6.6 10.25 h1 M8.9 10.25 h1 M11.1 10.25 h0.8" stroke="#b8a8b8" stroke-width="0.7"/>
</svg>
<div class="t" style="left:148.4px;top:302.04px;font-size:14.6px;color:#000;letter-spacing:-0.1px;">=EB3+ET1-X1:4</div>
<div class="t" style="left:308.4px;top:302.04px;font-size:14.6px;color:#000;letter-spacing:-0.1px;">=EB3+ET1-W11:BU</div>
<div style="left:485px;top:300px;width:84px;height:15px;background:#0000ff;"></div>
<div class="t" style="left:341.70000000000005px;width:600px;text-align:center;top:302.04px;font-size:14.6px;color:#000;letter-spacing:0.2px;">4</div>
<svg style="position:absolute;left:696px;top:299px" width="112" height="18" viewBox="0 0 112 18"><rect x="1" y="1" width="109" height="16" fill="#d9d9d9"/><path d="M1.5 16 V1.5 H109.5 V16" fill="none" stroke="#fff" stroke-opacity="0.55" stroke-width="1"/><rect x="0.5" y="0.5" width="110" height="16.4" fill="none" stroke="#111" stroke-width="1"/><path d="M0.5 16.8 H110.5" stroke="#333" stroke-width="1.2"/><rect x="72.5" y="3.5" width="20" height="10.8" rx="1" fill="#b9b9b9" stroke="#111" stroke-width="1"/><path d="M73 14.4 H92" stroke="#444" stroke-width="1"/><polygon points="9.00,2.50 10.91,3.78 13.17,4.23 13.62,6.49 14.90,8.40 13.62,10.31 13.17,12.57 10.91,13.02 9.00,14.30 7.09,13.02 4.83,12.57 4.38,10.31 3.10,8.40 4.38,6.49 4.83,4.23 7.09,3.78" fill="#d2d2d2" stroke="#111" stroke-width="1.1" stroke-linejoin="round"/><path d="M5.40 4.80 L12.60 12.00" stroke="#222" stroke-width="2.6"/><path d="M5.60 5.00 L12.40 11.80" stroke="#ccc" stroke-width="0.7"/><polygon points="103.00,2.50 104.91,3.78 107.17,4.23 107.62,6.49 108.90,8.40 107.62,10.31 107.17,12.57 104.91,13.02 103.00,14.30 101.09,13.02 98.83,12.57 98.38,10.31 97.10,8.40 98.38,6.49 98.83,4.23 101.09,3.78" fill="#d2d2d2" stroke="#111" stroke-width="1.1" stroke-linejoin="round"/><path d="M99.40 4.80 L106.60 12.00" stroke="#222" stroke-width="2.6"/><path d="M99.60 5.00 L106.40 11.80" stroke="#ccc" stroke-width="0.7"/></svg>
<div class="t" style="left:810.3px;top:302.04px;font-size:14.6px;color:#000;letter-spacing:-0.32px;">PXC.3044131</div>
<svg style="position:absolute;left:952px;top:304px" width="9" height="9"><circle cx="4.5" cy="4.5" r="1.8" fill="#f00000" stroke="#1a2020" stroke-width="0.9"/></svg>
<svg style="position:absolute;left:104px;top:319px" width="20" height="20" viewBox="0 0 20 20">
<path d="M3.8 5.6 L12.4 5.6 L16 2.8 L7.4 2.8 Z" fill="#4fb3d9"/>
<path d="M12.4 5.6 L16 2.8 L16 13.5 L12.4 16.5 Z" fill="#55b5da"/>
<rect x="3.8" y="5.6" width="8.6" height="10.9" fill="#45acd4"/>
<path d="M12.4 5.8 L15.8 3 M12.6 5.8 V16.3" stroke="#d8f0f8" stroke-width="0.7" fill="none"/>
<path d="M4 2 L4 10 L11.5 10 Z" fill="#d070f0"/>
<path d="M4 2 L4 10" stroke="#6a3a80" stroke-width="0.8"/>
<circle cx="6.3" cy="7.4" r="0.9" fill="#40c0c8"/>
<rect x="2.8" y="9.4" width="9.4" height="1.7" fill="#4a4040"/><path d="M4.3 10.25 h1 M6.6 10.25 h1 M8.9 10.25 h1 M11.1 10.25 h0.8" stroke="#b8a8b8" stroke-width="0.7"/>
</svg>
<div class="t" style="left:148.4px;top:323.04px;font-size:14.6px;color:#000;letter-spacing:-0.1px;">=EB3+ET1-X1:PE</div>
<div class="t" style="left:308.4px;top:323.04px;font-size:14.6px;color:#000;letter-spacing:-0.1px;">=EB3+ET1-W11:GNYE</div>
<div style="left:485px;top:321px;width:84px;height:15px;background:#00ff00;"></div>
<div class="t" style="left:341.70000000000005px;width:600px;text-align:center;top:323.04px;font-size:14.6px;color:#000;letter-spacing:0.2px;">PE</div>
<svg style="position:absolute;left:696px;top:320px" width="112" height="17" viewBox="0 0 112 17"><rect x="1" y="1" width="109" height="8.0" fill="#ffff80"/><rect x="1" y="9.0" width="109" height="6.5" fill="#a0ff80"/><path d="M1.5 15 V1.5 H109.5 V15" fill="none" stroke="#fff" stroke-opacity="0.55" stroke-width="1"/><rect x="0.5" y="0.5" width="110" height="15.4" fill="none" stroke="#111" stroke-width="1"/><path d="M0.5 15.8 H110.5" stroke="#333" stroke-width="1.2"/><polygon points="9.00,2.00 10.91,3.28 13.17,3.73 13.62,5.99 14.90,7.90 13.62,9.81 13.17,12.07 10.91,12.52 9.00,13.80 7.09,12.52 4.83,12.07 4.38,9.81 3.10,7.90 4.38,5.99 4.83,3.73 7.09,3.28" fill="#d2d2d2" stroke="#111" stroke-width="1.1" stroke-linejoin="round"/><path d="M5.40 4.30 L12.60 11.50" stroke="#222" stroke-width="2.6"/><path d="M5.60 4.50 L12.40 11.30" stroke="#ccc" stroke-width="0.7"/><polygon points="103.00,2.00 104.91,3.28 107.17,3.73 107.62,5.99 108.90,7.90 107.62,9.81 107.17,12.07 104.91,12.52 103.00,13.80 101.09,12.52 98.83,12.07 98.38,9.81 97.10,7.90 98.38,5.99 98.83,3.73 101.09,3.28" fill="#d2d2d2" stroke="#111" stroke-width="1.1" stroke-linejoin="round"/><path d="M99.40 4.30 L106.60 11.50" stroke="#222" stroke-width="2.6"/><path d="M99.60 4.50 L106.40 11.30" stroke="#ccc" stroke-width="0.7"/></svg>
<div class="t" style="left:810.3px;top:323.04px;font-size:14.6px;color:#000;letter-spacing:-0.32px;">PXC.3044157</div>
<svg style="position:absolute;left:104px;top:339px" width="20" height="20" viewBox="0 0 20 20">
<path d="M3.8 5.6 L12.4 5.6 L16 2.8 L7.4 2.8 Z" fill="#4fb3d9"/>
<path d="M12.4 5.6 L16 2.8 L16 13.5 L12.4 16.5 Z" fill="#55b5da"/>
<rect x="3.8" y="5.6" width="8.6" height="10.9" fill="#45acd4"/>
<path d="M12.4 5.8 L15.8 3 M12.6 5.8 V16.3" stroke="#d8f0f8" stroke-width="0.7" fill="none"/>
<path d="M4 2 L4 10 L11.5 10 Z" fill="#d070f0"/>
<path d="M4 2 L4 10" stroke="#6a3a80" stroke-width="0.8"/>
<circle cx="6.3" cy="7.4" r="0.9" fill="#40c0c8"/>
<rect x="2.8" y="9.4" width="9.4" height="1.7" fill="#4a4040"/><path d="M4.3 10.25 h1 M6.6 10.25 h1 M8.9 10.25 h1 M11.1 10.25 h0.8" stroke="#b8a8b8" stroke-width="0.7"/>
</svg>
<div class="t" style="left:148.4px;top:343.04px;font-size:14.6px;color:#000;letter-spacing:-0.1px;">=EB3+ET2-XA1:L1</div>
<div class="t" style="left:308.4px;top:343.04px;font-size:14.6px;color:#000;letter-spacing:-0.1px;">=EB3+ET2-W1:BK</div>
<div style="left:485px;top:341px;width:84px;height:15px;background:#000000;"></div>
<div class="t" style="left:341.70000000000005px;width:600px;text-align:center;top:343.04px;font-size:14.6px;color:#000;letter-spacing:0.2px;">6</div>
<svg style="position:absolute;left:696px;top:340px" width="112" height="18" viewBox="0 0 112 18"><rect x="1" y="1" width="109" height="16" fill="#d9d9d9"/><path d="M1.5 16 V1.5 H109.5 V16" fill="none" stroke="#fff" stroke-opacity="0.55" stroke-width="1"/><rect x="0.5" y="0.5" width="110" height="16.4" fill="none" stroke="#111" stroke-width="1"/><path d="M0.5 16.8 H110.5" stroke="#333" stroke-width="1.2"/><rect x="72.5" y="3.5" width="20" height="10.8" rx="1" fill="#b9b9b9" stroke="#111" stroke-width="1"/><path d="M73 14.4 H92" stroke="#444" stroke-width="1"/><polygon points="9.00,2.50 10.91,3.78 13.17,4.23 13.62,6.49 14.90,8.40 13.62,10.31 13.17,12.57 10.91,13.02 9.00,14.30 7.09,13.02 4.83,12.57 4.38,10.31 3.10,8.40 4.38,6.49 4.83,4.23 7.09,3.78" fill="#d2d2d2" stroke="#111" stroke-width="1.1" stroke-linejoin="round"/><path d="M5.40 4.80 L12.60 12.00" stroke="#222" stroke-width="2.6"/><path d="M5.60 5.00 L12.40 11.80" stroke="#ccc" stroke-width="0.7"/><polygon points="103.00,2.50 104.91,3.78 107.17,4.23 107.62,6.49 108.90,8.40 107.62,10.31 107.17,12.57 104.91,13.02 103.00,14.30 101.09,13.02 98.83,12.57 98.38,10.31 97.10,8.40 98.38,6.49 98.83,4.23 101.09,3.78" fill="#d2d2d2" stroke="#111" stroke-width="1.1" stroke-linejoin="round"/><path d="M99.40 4.80 L106.60 12.00" stroke="#222" stroke-width="2.6"/><path d="M99.60 5.00 L106.40 11.80" stroke="#ccc" stroke-width="0.7"/></svg>
<div class="t" style="left:810.3px;top:343.04px;font-size:14.6px;color:#000;letter-spacing:-0.32px;">PXC.3044131</div>
<div class="t" style="left:1065.4px;top:343.04px;font-size:14.6px;color:#000;letter-spacing:-0.1px;">=EB3+ET2-Q1:1</div>
<div style="left:1193px;top:345px;width:32px;height:10px;border:1.5px solid #222;border-radius:1px;background:#f6f6f6;"></div>
<svg style="position:absolute;left:104px;top:360px" width="20" height="20" viewBox="0 0 20 20">
<path d="M3.8 5.6 L12.4 5.6 L16 2.8 L7.4 2.8 Z" fill="#4fb3d9"/>
<path d="M12.4 5.6 L16 2.8 L16 13.5 L12.4 16.5 Z" fill="#55b5da"/>
<rect x="3.8" y="5.6" width="8.6" height="10.9" fill="#45acd4"/>
<path d="M12.4 5.8 L15.8 3 M12.6 5.8 V16.3" stroke="#d8f0f8" stroke-width="0.7" fill="none"/>
<path d="M4 2 L4 10 L11.5 10 Z" fill="#d070f0"/>
<path d="M4 2 L4 10" stroke="#6a3a80" stroke-width="0.8"/>
<circle cx="6.3" cy="7.4" r="0.9" fill="#40c0c8"/>
<rect x="2.8" y="9.4" width="9.4" height="1.7" fill="#4a4040"/><path d="M4.3 10.25 h1 M6.6 10.25 h1 M8.9 10.25 h1 M11.1 10.25 h0.8" stroke="#b8a8b8" stroke-width="0.7"/>
</svg>
<div class="t" style="left:148.4px;top:364.04px;font-size:14.6px;color:#000;letter-spacing:-0.1px;">=EB3+ET2-XA1:L2</div>
<div class="t" style="left:308.4px;top:364.04px;font-size:14.6px;color:#000;letter-spacing:-0.1px;">=EB3+ET2-W1:BN</div>
<div style="left:485px;top:362px;width:84px;height:15px;background:#a00000;"></div>
<div class="t" style="left:341.70000000000005px;width:600px;text-align:center;top:364.04px;font-size:14.6px;color:#000;letter-spacing:0.2px;">7</div>
<svg style="position:absolute;left:696px;top:361px" width="112" height="18" viewBox="0 0 112 18"><rect x="1" y="1" width="109" height="16" fill="#d9d9d9"/><path d="M1.5 16 V1.5 H109.5 V16" fill="none" stroke="#fff" stroke-opacity="0.55" stroke-width="1"/><rect x="0.5" y="0.5" width="110" height="16.4" fill="none" stroke="#111" stroke-width="1"/><path d="M0.5 16.8 H110.5" stroke="#333" stroke-width="1.2"/><rect x="72.5" y="3.5" width="20" height="10.8" rx="1" fill="#b9b9b9" stroke="#111" stroke-width="1"/><path d="M73 14.4 H92" stroke="#444" stroke-width="1"/><polygon points="9.00,2.50 10.91,3.78 13.17,4.23 13.62,6.49 14.90,8.40 13.62,10.31 13.17,12.57 10.91,13.02 9.00,14.30 7.09,13.02 4.83,12.57 4.38,10.31 3.10,8.40 4.38,6.49 4.83,4.23 7.09,3.78" fill="#d2d2d2" stroke="#111" stroke-width="1.1" stroke-linejoin="round"/><path d="M5.40 4.80 L12.60 12.00" stroke="#222" stroke-width="2.6"/><path d="M5.60 5.00 L12.40 11.80" stroke="#ccc" stroke-width="0.7"/><polygon points="103.00,2.50 104.91,3.78 107.17,4.23 107.62,6.49 108.90,8.40 107.62,10.31 107.17,12.57 104.91,13.02 103.00,14.30 101.09,13.02 98.83,12.57 98.38,10.31 97.10,8.40 98.38,6.49 98.83,4.23 101.09,3.78" fill="#d2d2d2" stroke="#111" stroke-width="1.1" stroke-linejoin="round"/><path d="M99.40 4.80 L106.60 12.00" stroke="#222" stroke-width="2.6"/><path d="M99.60 5.00 L106.40 11.80" stroke="#ccc" stroke-width="0.7"/></svg>
<div class="t" style="left:810.3px;top:364.04px;font-size:14.6px;color:#000;letter-spacing:-0.32px;">PXC.3044131</div>
<div class="t" style="left:1065.4px;top:364.04px;font-size:14.6px;color:#000;letter-spacing:-0.1px;">=EB3+ET2-Q1:3</div>
<div style="left:1193px;top:366px;width:32px;height:10px;border:1.5px solid #222;border-radius:1px;background:#f6f6f6;"></div>
<svg style="position:absolute;left:104px;top:381px" width="20" height="20" viewBox="0 0 20 20">
<path d="M3.8 5.6 L12.4 5.6 L16 2.8 L7.4 2.8 Z" fill="#4fb3d9"/>
<path d="M12.4 5.6 L16 2.8 L16 13.5 L12.4 16.5 Z" fill="#55b5da"/>
<rect x="3.8" y="5.6" width="8.6" height="10.9" fill="#45acd4"/>
<path d="M12.4 5.8 L15.8 3 M12.6 5.8 V16.3" stroke="#d8f0f8" stroke-width="0.7" fill="none"/>
<path d="M4 2 L4 10 L11.5 10 Z" fill="#d070f0"/>
<path d="M4 2 L4 10" stroke="#6a3a80" stroke-width="0.8"/>
<circle cx="6.3" cy="7.4" r="0.9" fill="#40c0c8"/>
<rect x="2.8" y="9.4" width="9.4" height="1.7" fill="#4a4040"/><path d="M4.3 10.25 h1 M6.6 10.25 h1 M8.9 10.25 h1 M11.1 10.25 h0.8" stroke="#b8a8b8" stroke-width="0.7"/>
</svg>
<div class="t" style="left:148.4px;top:385.04px;font-size:14.6px;color:#000;letter-spacing:-0.1px;">=EB3+ET2-XA1:L3</div>
<div class="t" style="left:308.4px;top:385.04px;font-size:14.6px;color:#000;letter-spacing:-0.1px;">=EB3+ET2-W1:GY</div>
<div style="left:485px;top:383px;width:84px;height:15px;background:#808080;"></div>
<div class="t" style="left:341.70000000000005px;width:600px;text-align:center;top:385.04px;font-size:14.6px;color:#000;letter-spacing:0.2px;">8</div>
<svg style="position:absolute;left:696px;top:382px" width="112" height="18" viewBox="0 0 112 18"><rect x="1" y="1" width="109" height="16" fill="#d9d9d9"/><path d="M1.5 16 V1.5 H109.5 V16" fill="none" stroke="#fff" stroke-opacity="0.55" stroke-width="1"/><rect x="0.5" y="0.5" width="110" height="16.4" fill="none" stroke="#111" stroke-width="1"/><path d="M0.5 16.8 H110.5" stroke="#333" stroke-width="1.2"/><rect x="72.5" y="3.5" width="20" height="10.8" rx="1" fill="#b9b9b9" stroke="#111" stroke-width="1"/><path d="M73 14.4 H92" stroke="#444" stroke-width="1"/><polygon points="9.00,2.50 10.91,3.78 13.17,4.23 13.62,6.49 14.90,8.40 13.62,10.31 13.17,12.57 10.91,13.02 9.00,14.30 7.09,13.02 4.83,12.57 4.38,10.31 3.10,8.40 4.38,6.49 4.83,4.23 7.09,3.78" fill="#d2d2d2" stroke="#111" stroke-width="1.1" stroke-linejoin="round"/><path d="M5.40 4.80 L12.60 12.00" stroke="#222" stroke-width="2.6"/><path d="M5.60 5.00 L12.40 11.80" stroke="#ccc" stroke-width="0.7"/><polygon points="103.00,2.50 104.91,3.78 107.17,4.23 107.62,6.49 108.90,8.40 107.62,10.31 107.17,12.57 104.91,13.02 103.00,14.30 101.09,13.02 98.83,12.57 98.38,10.31 97.10,8.40 98.38,6.49 98.83,4.23 101.09,3.78" fill="#d2d2d2" stroke="#111" stroke-width="1.1" stroke-linejoin="round"/><path d="M99.40 4.80 L106.60 12.00" stroke="#222" stroke-width="2.6"/><path d="M99.60 5.00 L106.40 11.80" stroke="#ccc" stroke-width="0.7"/></svg>
<div class="t" style="left:810.3px;top:385.04px;font-size:14.6px;color:#000;letter-spacing:-0.32px;">PXC.3044131</div>
<div class="t" style="left:1065.4px;top:385.04px;font-size:14.6px;color:#000;letter-spacing:-0.1px;">=EB3+ET2-Q1:5</div>
<div style="left:1193px;top:387px;width:32px;height:10px;border:1.5px solid #222;border-radius:1px;background:#f6f6f6;"></div>
<svg style="position:absolute;left:104px;top:402px" width="20" height="20" viewBox="0 0 20 20">
<path d="M3.8 5.6 L12.4 5.6 L16 2.8 L7.4 2.8 Z" fill="#4fb3d9"/>
<path d="M12.4 5.6 L16 2.8 L16 13.5 L12.4 16.5 Z" fill="#55b5da"/>
<rect x="3.8" y="5.6" width="8.6" height="10.9" fill="#45acd4"/>
<path d="M12.4 5.8 L15.8 3 M12.6 5.8 V16.3" stroke="#d8f0f8" stroke-width="0.7" fill="none"/>
<path d="M4 2 L4 10 L11.5 10 Z" fill="#d070f0"/>
<path d="M4 2 L4 10" stroke="#6a3a80" stroke-width="0.8"/>
<circle cx="6.3" cy="7.4" r="0.9" fill="#40c0c8"/>
<rect x="2.8" y="9.4" width="9.4" height="1.7" fill="#4a4040"/><path d="M4.3 10.25 h1 M6.6 10.25 h1 M8.9 10.25 h1 M11.1 10.25 h0.8" stroke="#b8a8b8" stroke-width="0.7"/>
</svg>
<div class="t" style="left:148.4px;top:406.04px;font-size:14.6px;color:#000;letter-spacing:-0.1px;">=EB3+ET2-XA1:N</div>
<div class="t" style="left:308.4px;top:406.04px;font-size:14.6px;color:#000;letter-spacing:-0.1px;">=EB3+ET2-W1:BU</div>
<div style="left:485px;top:404px;width:84px;height:15px;background:#0000ff;"></div>
<div class="t" style="left:341.70000000000005px;width:600px;text-align:center;top:406.04px;font-size:14.6px;color:#000;letter-spacing:0.2px;">9</div>
<svg style="position:absolute;left:696px;top:403px" width="112" height="17" viewBox="0 0 112 17"><rect x="1" y="1" width="109" height="15" fill="#80c0ff"/><path d="M1.5 15 V1.5 H109.5 V15" fill="none" stroke="#fff" stroke-opacity="0.55" stroke-width="1"/><rect x="0.5" y="0.5" width="110" height="15.4" fill="none" stroke="#111" stroke-width="1"/><path d="M0.5 15.8 H110.5" stroke="#333" stroke-width="1.2"/><path d="M19 9.0 h1.5 M21.8 9.0 h1.5 M36.5 9.0 h1.5 M39.2 9.0 h1.5" stroke="#111" stroke-width="1.2"/><path d="M24.5 8.0 Q29.8 3.5 35.2 8.0" fill="none" stroke="#111" stroke-width="1"/><path d="M29 2.5 l1.3 1" stroke="#111" stroke-width="0.9"/><polygon points="9.00,2.00 10.91,3.28 13.17,3.73 13.62,5.99 14.90,7.90 13.62,9.81 13.17,12.07 10.91,12.52 9.00,13.80 7.09,12.52 4.83,12.07 4.38,9.81 3.10,7.90 4.38,5.99 4.83,3.73 7.09,3.28" fill="#d2d2d2" stroke="#111" stroke-width="1.1" stroke-linejoin="round"/><path d="M5.40 4.30 L12.60 11.50" stroke="#222" stroke-width="2.6"/><path d="M5.60 4.50 L12.40 11.30" stroke="#ccc" stroke-width="0.7"/><polygon points="103.00,2.00 104.91,3.28 107.17,3.73 107.62,5.99 108.90,7.90 107.62,9.81 107.17,12.07 104.91,12.52 103.00,13.80 101.09,12.52 98.83,12.07 98.38,9.81 97.10,7.90 98.38,5.99 98.83,3.73 101.09,3.28" fill="#d2d2d2" stroke="#111" stroke-width="1.1" stroke-linejoin="round"/><path d="M99.40 4.30 L106.60 11.50" stroke="#222" stroke-width="2.6"/><path d="M99.60 4.50 L106.40 11.30" stroke="#ccc" stroke-width="0.7"/></svg>
<div class="t" style="left:810.3px;top:406.04px;font-size:14.6px;color:#000;letter-spacing:-0.32px;">PXC.3046456</div>
<svg style="position:absolute;left:104px;top:422px" width="20" height="20" viewBox="0 0 20 20">
<path d="M3.8 5.6 L12.4 5.6 L16 2.8 L7.4 2.8 Z" fill="#4fb3d9"/>
<path d="M12.4 5.6 L16 2.8 L16 13.5 L12.4 16.5 Z" fill="#55b5da"/>
<rect x="3.8" y="5.6" width="8.6" height="10.9" fill="#45acd4"/>
<path d="M12.4 5.8 L15.8 3 M12.6 5.8 V16.3" stroke="#d8f0f8" stroke-width="0.7" fill="none"/>
<path d="M4 2 L4 10 L11.5 10 Z" fill="#d070f0"/>
<path d="M4 2 L4 10" stroke="#6a3a80" stroke-width="0.8"/>
<circle cx="6.3" cy="7.4" r="0.9" fill="#40c0c8"/>
<rect x="2.8" y="9.4" width="9.4" height="1.7" fill="#4a4040"/><path d="M4.3 10.25 h1 M6.6 10.25 h1 M8.9 10.25 h1 M11.1 10.25 h0.8" stroke="#b8a8b8" stroke-width="0.7"/>
</svg>
<div class="t" style="left:148.4px;top:426.04px;font-size:14.6px;color:#000;letter-spacing:-0.1px;">=EB3+ET2-XA1:PE</div>
<div class="t" style="left:308.4px;top:426.04px;font-size:14.6px;color:#000;letter-spacing:-0.1px;">=EB3+ET2-W1:GNYE</div>
<div style="left:485px;top:424px;width:84px;height:15px;background:#00ff00;"></div>
<div class="t" style="left:341.70000000000005px;width:600px;text-align:center;top:426.04px;font-size:14.6px;color:#000;letter-spacing:0.2px;">PE</div>
<svg style="position:absolute;left:696px;top:423px" width="112" height="18" viewBox="0 0 112 18"><rect x="1" y="1" width="109" height="8.5" fill="#ffff80"/><rect x="1" y="9.5" width="109" height="7.0" fill="#a0ff80"/><path d="M1.5 16 V1.5 H109.5 V16" fill="none" stroke="#fff" stroke-opacity="0.55" stroke-width="1"/><rect x="0.5" y="0.5" width="110" height="16.4" fill="none" stroke="#111" stroke-width="1"/><path d="M0.5 16.8 H110.5" stroke="#333" stroke-width="1.2"/><polygon points="9.00,2.50 10.91,3.78 13.17,4.23 13.62,6.49 14.90,8.40 13.62,10.31 13.17,12.57 10.91,13.02 9.00,14.30 7.09,13.02 4.83,12.57 4.38,10.31 3.10,8.40 4.38,6.49 4.83,4.23 7.09,3.78" fill="#d2d2d2" stroke="#111" stroke-width="1.1" stroke-linejoin="round"/><path d="M5.40 4.80 L12.60 12.00" stroke="#222" stroke-width="2.6"/><path d="M5.60 5.00 L12.40 11.80" stroke="#ccc" stroke-width="0.7"/><polygon points="103.00,2.50 104.91,3.78 107.17,4.23 107.62,6.49 108.90,8.40 107.62,10.31 107.17,12.57 104.91,13.02 103.00,14.30 101.09,13.02 98.83,12.57 98.38,10.31 97.10,8.40 98.38,6.49 98.83,4.23 101.09,3.78" fill="#d2d2d2" stroke="#111" stroke-width="1.1" stroke-linejoin="round"/><path d="M99.40 4.80 L106.60 12.00" stroke="#222" stroke-width="2.6"/><path d="M99.60 5.00 L106.40 11.80" stroke="#ccc" stroke-width="0.7"/></svg>
<div class="t" style="left:810.3px;top:426.04px;font-size:14.6px;color:#000;letter-spacing:-0.32px;">PXC.3044157</div>
<svg style="position:absolute;left:104px;top:443px" width="20" height="20" viewBox="0 0 20 20">
<path d="M3.8 5.6 L12.4 5.6 L16 2.8 L7.4 2.8 Z" fill="#4fb3d9"/>
<path d="M12.4 5.6 L16 2.8 L16 13.5 L12.4 16.5 Z" fill="#55b5da"/>
<rect x="3.8" y="5.6" width="8.6" height="10.9" fill="#45acd4"/>
<path d="M12.4 5.8 L15.8 3 M12.6 5.8 V16.3" stroke="#d8f0f8" stroke-width="0.7" fill="none"/>
<path d="M4 2 L4 10 L11.5 10 Z" fill="#d070f0"/>
<path d="M4 2 L4 10" stroke="#6a3a80" stroke-width="0.8"/>
<circle cx="6.3" cy="7.4" r="0.9" fill="#40c0c8"/>
<rect x="2.8" y="9.4" width="9.4" height="1.7" fill="#4a4040"/><path d="M4.3 10.25 h1 M6.6 10.25 h1 M8.9 10.25 h1 M11.1 10.25 h0.8" stroke="#b8a8b8" stroke-width="0.7"/>
</svg>
<div class="t" style="left:148.4px;top:447.04px;font-size:14.6px;color:#000;letter-spacing:-0.1px;">=EB3+ET2-W1:SH</div>
<div class="t" style="left:308.4px;top:447.04px;font-size:14.6px;color:#000;letter-spacing:-0.1px;">=EB3+ET2-W1:SH</div>
<div style="left:485px;top:445px;width:84px;height:15px;background:#000000;"></div>
<div class="t" style="left:341.70000000000005px;width:600px;text-align:center;top:447.04px;font-size:14.6px;color:#000;letter-spacing:0.2px;">PE</div>
<svg style="position:absolute;left:696px;top:444px" width="112" height="18" viewBox="0 0 112 18"><rect x="1" y="1" width="109" height="8.5" fill="#ffff80"/><rect x="1" y="9.5" width="109" height="7.0" fill="#a0ff80"/><path d="M1.5 16 V1.5 H109.5 V16" fill="none" stroke="#fff" stroke-opacity="0.55" stroke-width="1"/><rect x="0.5" y="0.5" width="110" height="16.4" fill="none" stroke="#111" stroke-width="1"/><path d="M0.5 16.8 H110.5" stroke="#333" stroke-width="1.2"/><polygon points="9.00,2.50 10.91,3.78 13.17,4.23 13.62,6.49 14.90,8.40 13.62,10.31 13.17,12.57 10.91,13.02 9.00,14.30 7.09,13.02 4.83,12.57 4.38,10.31 3.10,8.40 4.38,6.49 4.83,4.23 7.09,3.78" fill="#d2d2d2" stroke="#111" stroke-width="1.1" stroke-linejoin="round"/><path d="M5.40 4.80 L12.60 12.00" stroke="#222" stroke-width="2.6"/><path d="M5.60 5.00 L12.40 11.80" stroke="#ccc" stroke-width="0.7"/><polygon points="103.00,2.50 104.91,3.78 107.17,4.23 107.62,6.49 108.90,8.40 107.62,10.31 107.17,12.57 104.91,13.02 103.00,14.30 101.09,13.02 98.83,12.57 98.38,10.31 97.10,8.40 98.38,6.49 98.83,4.23 101.09,3.78" fill="#d2d2d2" stroke="#111" stroke-width="1.1" stroke-linejoin="round"/><path d="M99.40 4.80 L106.60 12.00" stroke="#222" stroke-width="2.6"/><path d="M99.60 5.00 L106.40 11.80" stroke="#ccc" stroke-width="0.7"/></svg>
<div class="t" style="left:810.3px;top:447.04px;font-size:14.6px;color:#000;letter-spacing:-0.32px;">PXC.3044157</div>
<svg style="position:absolute;left:104px;top:464px" width="20" height="20" viewBox="0 0 20 20">
<path d="M3.8 5.6 L12.4 5.6 L16 2.8 L7.4 2.8 Z" fill="#4fb3d9"/>
<path d="M12.4 5.6 L16 2.8 L16 13.5 L12.4 16.5 Z" fill="#55b5da"/>
<rect x="3.8" y="5.6" width="8.6" height="10.9" fill="#45acd4"/>
<path d="M12.4 5.8 L15.8 3 M12.6 5.8 V16.3" stroke="#d8f0f8" stroke-width="0.7" fill="none"/>
<path d="M4 2 L4 10 L11.5 10 Z" fill="#d070f0"/>
<path d="M4 2 L4 10" stroke="#6a3a80" stroke-width="0.8"/>
<circle cx="6.3" cy="7.4" r="0.9" fill="#40c0c8"/>
<rect x="2.8" y="9.4" width="9.4" height="1.7" fill="#4a4040"/><path d="M4.3 10.25 h1 M6.6 10.25 h1 M8.9 10.25 h1 M11.1 10.25 h0.8" stroke="#b8a8b8" stroke-width="0.7"/>
</svg>
<div class="t" style="left:148.4px;top:468.04px;font-size:14.6px;color:#000;letter-spacing:-0.1px;">=EB3+ET2-XS1:1</div>
<div class="t" style="left:308.4px;top:468.04px;font-size:14.6px;color:#000;letter-spacing:-0.1px;">=EB3+ET2-W2:BK</div>
<div style="left:485px;top:466px;width:84px;height:15px;background:#000000;"></div>
<div class="t" style="left:341.70000000000005px;width:600px;text-align:center;top:468.04px;font-size:14.6px;color:#000;letter-spacing:0.2px;">12</div>
<svg style="position:absolute;left:696px;top:465px" width="112" height="18" viewBox="0 0 112 18"><rect x="1" y="1" width="109" height="16" fill="#d9d9d9"/><path d="M1.5 16 V1.5 H109.5 V16" fill="none" stroke="#fff" stroke-opacity="0.55" stroke-width="1"/><rect x="0.5" y="0.5" width="110" height="16.4" fill="none" stroke="#111" stroke-width="1"/><path d="M0.5 16.8 H110.5" stroke="#333" stroke-width="1.2"/><rect x="72.5" y="3.5" width="20" height="10.8" rx="1" fill="#b9b9b9" stroke="#111" stroke-width="1"/><path d="M73 14.4 H92" stroke="#444" stroke-width="1"/><polygon points="9.00,2.50 10.91,3.78 13.17,4.23 13.62,6.49 14.90,8.40 13.62,10.31 13.17,12.57 10.91,13.02 9.00,14.30 7.09,13.02 4.83,12.57 4.38,10.31 3.10,8.40 4.38,6.49 4.83,4.23 7.09,3.78" fill="#d2d2d2" stroke="#111" stroke-width="1.1" stroke-linejoin="round"/><path d="M5.40 4.80 L12.60 12.00" stroke="#222" stroke-width="2.6"/><path d="M5.60 5.00 L12.40 11.80" stroke="#ccc" stroke-width="0.7"/><polygon points="103.00,2.50 104.91,3.78 107.17,4.23 107.62,6.49 108.90,8.40 107.62,10.31 107.17,12.57 104.91,13.02 103.00,14.30 101.09,13.02 98.83,12.57 98.38,10.31 97.10,8.40 98.38,6.49 98.83,4.23 101.09,3.78" fill="#d2d2d2" stroke="#111" stroke-width="1.1" stroke-linejoin="round"/><path d="M99.40 4.80 L106.60 12.00" stroke="#222" stroke-width="2.6"/><path d="M99.60 5.00 L106.40 11.80" stroke="#ccc" stroke-width="0.7"/></svg>
<div class="t" style="left:810.3px;top:468.04px;font-size:14.6px;color:#000;letter-spacing:-0.32px;">PXC.3031212</div>
<div class="t" style="left:1065.4px;top:468.04px;font-size:14.6px;color:#000;letter-spacing:-0.1px;">=EB3+ET2-K1:2</div>
<div style="left:1193px;top:470px;width:32px;height:10px;border:1.5px solid #222;border-radius:1px;background:#f6f6f6;"></div>
<svg style="position:absolute;left:104px;top:485px" width="20" height="20" viewBox="0 0 20 20">
<path d="M3.8 5.6 L12.4 5.6 L16 2.8 L7.4 2.8 Z" fill="#4fb3d9"/>
<path d="M12.4 5.6 L16 2.8 L16 13.5 L12.4 16.5 Z" fill="#55b5da"/>
<rect x="3.8" y="5.6" width="8.6" height="10.9" fill="#45acd4"/>
<path d="M12.4 5.8 L15.8 3 M12.6 5.8 V16.3" stroke="#d8f0f8" stroke-width="0.7" fill="none"/>
<path d="M4 2 L4 10 L11.5 10 Z" fill="#d070f0"/>
<path d="M4 2 L4 10" stroke="#6a3a80" stroke-width="0.8"/>
<circle cx="6.3" cy="7.4" r="0.9" fill="#40c0c8"/>
<rect x="2.8" y="9.4" width="9.4" height="1.7" fill="#4a4040"/><path d="M4.3 10.25 h1 M6.6 10.25 h1 M8.9 10.25 h1 M11.1 10.25 h0.8" stroke="#b8a8b8" stroke-width="0.7"/>
</svg>
<div class="t" style="left:148.4px;top:489.04px;font-size:14.6px;color:#000;letter-spacing:-0.1px;">=EB3+ET2-XS1:2</div>
<div class="t" style="left:308.4px;top:489.04px;font-size:14.6px;color:#000;letter-spacing:-0.1px;">=EB3+ET2-W2:BN</div>
<div style="left:485px;top:487px;width:84px;height:15px;background:#a00000;"></div>
<div class="t" style="left:341.70000000000005px;width:600px;text-align:center;top:489.04px;font-size:14.6px;color:#000;letter-spacing:0.2px;">13</div>
<svg style="position:absolute;left:696px;top:486px" width="112" height="17" viewBox="0 0 112 17"><rect x="1" y="1" width="109" height="15" fill="#d9d9d9"/><path d="M1.5 15 V1.5 H109.5 V15" fill="none" stroke="#fff" stroke-opacity="0.55" stroke-width="1"/><rect x="0.5" y="0.5" width="110" height="15.4" fill="none" stroke="#111" stroke-width="1"/><path d="M0.5 15.8 H110.5" stroke="#333" stroke-width="1.2"/><rect x="72.5" y="3.5" width="20" height="9.8" rx="1" fill="#b9b9b9" stroke="#111" stroke-width="1"/><path d="M73 13.4 H92" stroke="#444" stroke-width="1"/><polygon points="9.00,2.00 10.91,3.28 13.17,3.73 13.62,5.99 14.90,7.90 13.62,9.81 13.17,12.07 10.91,12.52 9.00,13.80 7.09,12.52 4.83,12.07 4.38,9.81 3.10,7.90 4.38,5.99 4.83,3.73 7.09,3.28" fill="#d2d2d2" stroke="#111" stroke-width="1.1" stroke-linejoin="round"/><path d="M5.40 4.30 L12.60 11.50" stroke="#222" stroke-width="2.6"/><path d="M5.60 4.50 L12.40 11.30" stroke="#ccc" stroke-width="0.7"/><polygon points="103.00,2.00 104.91,3.28 107.17,3.73 107.62,5.99 108.90,7.90 107.62,9.81 107.17,12.07 104.91,12.52 103.00,13.80 101.09,12.52 98.83,12.07 98.38,9.81 97.10,7.90 98.38,5.99 98.83,3.73 101.09,3.28" fill="#d2d2d2" stroke="#111" stroke-width="1.1" stroke-linejoin="round"/><path d="M99.40 4.30 L106.60 11.50" stroke="#222" stroke-width="2.6"/><path d="M99.60 4.50 L106.40 11.30" stroke="#ccc" stroke-width="0.7"/></svg>
<div class="t" style="left:810.3px;top:489.04px;font-size:14.6px;color:#000;letter-spacing:-0.32px;">PXC.3031212</div>
<div class="t" style="left:1065.4px;top:489.04px;font-size:14.6px;color:#000;letter-spacing:-0.1px;">=EB3+ET2-K1:4</div>
<div style="left:1193px;top:491px;width:32px;height:10px;border:1.5px solid #222;border-radius:1px;background:#f6f6f6;"></div>
<svg style="position:absolute;left:104px;top:505px" width="20" height="20" viewBox="0 0 20 20">
<path d="M3.8 5.6 L12.4 5.6 L16 2.8 L7.4 2.8 Z" fill="#4fb3d9"/>
<path d="M12.4 5.6 L16 2.8 L16 13.5 L12.4 16.5 Z" fill="#55b5da"/>
<rect x="3.8" y="5.6" width="8.6" height="10.9" fill="#45acd4"/>
<path d="M12.4 5.8 L15.8 3 M12.6 5.8 V16.3" stroke="#d8f0f8" stroke-width="0.7" fill="none"/>
<path d="M4 2 L4 10 L11.5 10 Z" fill="#d070f0"/>
<path d="M4 2 L4 10" stroke="#6a3a80" stroke-width="0.8"/>
<circle cx="6.3" cy="7.4" r="0.9" fill="#40c0c8"/>
<rect x="2.8" y="9.4" width="9.4" height="1.7" fill="#4a4040"/><path d="M4.3 10.25 h1 M6.6 10.25 h1 M8.9 10.25 h1 M11.1 10.25 h0.8" stroke="#b8a8b8" stroke-width="0.7"/>
</svg>
<div class="t" style="left:148.4px;top:509.04px;font-size:14.6px;color:#000;letter-spacing:-0.1px;">=EB3+ET2-XS1:3</div>
<div class="t" style="left:308.4px;top:509.04px;font-size:14.6px;color:#000;letter-spacing:-0.1px;">=EB3+ET2-W2:GY</div>
<div style="left:485px;top:507px;width:84px;height:15px;background:#808080;"></div>
<div class="t" style="left:341.70000000000005px;width:600px;text-align:center;top:509.04px;font-size:14.6px;color:#000;letter-spacing:0.2px;">14</div>
<svg style="position:absolute;left:696px;top:506px" width="112" height="18" viewBox="0 0 112 18"><rect x="1" y="1" width="109" height="16" fill="#d9d9d9"/><path d="M1.5 16 V1.5 H109.5 V16" fill="none" stroke="#fff" stroke-opacity="0.55" stroke-width="1"/><rect x="0.5" y="0.5" width="110" height="16.4" fill="none" stroke="#111" stroke-width="1"/><path d="M0.5 16.8 H110.5" stroke="#333" stroke-width="1.2"/><rect x="72.5" y="3.5" width="20" height="10.8" rx="1" fill="#b9b9b9" stroke="#111" stroke-width="1"/><path d="M73 14.4 H92" stroke="#444" stroke-width="1"/><polygon points="9.00,2.50 10.91,3.78 13.17,4.23 13.62,6.49 14.90,8.40 13.62,10.31 13.17,12.57 10.91,13.02 9.00,14.30 7.09,13.02 4.83,12.57 4.38,10.31 3.10,8.40 4.38,6.49 4.83,4.23 7.09,3.78" fill="#d2d2d2" stroke="#111" stroke-width="1.1" stroke-linejoin="round"/><path d="M5.40 4.80 L12.60 12.00" stroke="#222" stroke-width="2.6"/><path d="M5.60 5.00 L12.40 11.80" stroke="#ccc" stroke-width="0.7"/><polygon points="103.00,2.50 104.91,3.78 107.17,4.23 107.62,6.49 108.90,8.40 107.62,10.31 107.17,12.57 104.91,13.02 103.00,14.30 101.09,13.02 98.83,12.57 98.38,10.31 97.10,8.40 98.38,6.49 98.83,4.23 101.09,3.78" fill="#d2d2d2" stroke="#111" stroke-width="1.1" stroke-linejoin="round"/><path d="M99.40 4.80 L106.60 12.00" stroke="#222" stroke-width="2.6"/><path d="M99.60 5.00 L106.40 11.80" stroke="#ccc" stroke-width="0.7"/></svg>
<div class="t" style="left:810.3px;top:509.04px;font-size:14.6px;color:#000;letter-spacing:-0.32px;">PXC.3031212</div>
<div class="t" style="left:1065.4px;top:509.04px;font-size:14.6px;color:#000;letter-spacing:-0.1px;">=EB3+ET2-K1:6</div>
<div style="left:1193px;top:511px;width:32px;height:10px;border:1.5px solid #222;border-radius:1px;background:#f6f6f6;"></div>
<svg style="position:absolute;left:104px;top:526px" width="20" height="20" viewBox="0 0 20 20">
<path d="M3.8 5.6 L12.4 5.6 L16 2.8 L7.4 2.8 Z" fill="#4fb3d9"/>
<path d="M12.4 5.6 L16 2.8 L16 13.5 L12.4 16.5 Z" fill="#55b5da"/>
<rect x="3.8" y="5.6" width="8.6" height="10.9" fill="#45acd4"/>
<path d="M12.4 5.8 L15.8 3 M12.6 5.8 V16.3" stroke="#d8f0f8" stroke-width="0.7" fill="none"/>
<path d="M4 2 L4 10 L11.5 10 Z" fill="#d070f0"/>
<path d="M4 2 L4 10" stroke="#6a3a80" stroke-width="0.8"/>
<circle cx="6.3" cy="7.4" r="0.9" fill="#40c0c8"/>
<rect x="2.8" y="9.4" width="9.4" height="1.7" fill="#4a4040"/><path d="M4.3 10.25 h1 M6.6 10.25 h1 M8.9 10.25 h1 M11.1 10.25 h0.8" stroke="#b8a8b8" stroke-width="0.7"/>
</svg>
<div class="t" style="left:148.4px;top:530.04px;font-size:14.6px;color:#000;letter-spacing:-0.1px;">=EB3+ET2-XS1:PE</div>
<div class="t" style="left:308.4px;top:530.04px;font-size:14.6px;color:#000;letter-spacing:-0.1px;">=EB3+ET2-W2:GNYE</div>
<div style="left:485px;top:528px;width:84px;height:15px;background:#00ff00;"></div>
<div class="t" style="left:341.70000000000005px;width:600px;text-align:center;top:530.04px;font-size:14.6px;color:#000;letter-spacing:0.2px;">PE</div>
<svg style="position:absolute;left:696px;top:527px" width="112" height="18" viewBox="0 0 112 18"><rect x="1" y="1" width="109" height="8.5" fill="#ffff80"/><rect x="1" y="9.5" width="109" height="7.0" fill="#a0ff80"/><path d="M1.5 16 V1.5 H109.5 V16" fill="none" stroke="#fff" stroke-opacity="0.55" stroke-width="1"/><rect x="0.5" y="0.5" width="110" height="16.4" fill="none" stroke="#111" stroke-width="1"/><path d="M0.5 16.8 H110.5" stroke="#333" stroke-width="1.2"/><polygon points="9.00,2.50 10.91,3.78 13.17,4.23 13.62,6.49 14.90,8.40 13.62,10.31 13.17,12.57 10.91,13.02 9.00,14.30 7.09,13.02 4.83,12.57 4.38,10.31 3.10,8.40 4.38,6.49 4.83,4.23 7.09,3.78" fill="#d2d2d2" stroke="#111" stroke-width="1.1" stroke-linejoin="round"/><path d="M5.40 4.80 L12.60 12.00" stroke="#222" stroke-width="2.6"/><path d="M5.60 5.00 L12.40 11.80" stroke="#ccc" stroke-width="0.7"/><polygon points="103.00,2.50 104.91,3.78 107.17,4.23 107.62,6.49 108.90,8.40 107.62,10.31 107.17,12.57 104.91,13.02 103.00,14.30 101.09,13.02 98.83,12.57 98.38,10.31 97.10,8.40 98.38,6.49 98.83,4.23 101.09,3.78" fill="#d2d2d2" stroke="#111" stroke-width="1.1" stroke-linejoin="round"/><path d="M99.40 4.80 L106.60 12.00" stroke="#222" stroke-width="2.6"/><path d="M99.60 5.00 L106.40 11.80" stroke="#ccc" stroke-width="0.7"/></svg>
<div class="t" style="left:810.3px;top:530.04px;font-size:14.6px;color:#000;letter-spacing:-0.32px;">PXC.3031238</div>
<div class="t" style="left:341.70000000000005px;width:600px;text-align:center;top:551.04px;font-size:14.6px;color:#000;letter-spacing:-0.32px;">PXC.3022276</div>
<svg style="position:absolute;left:696px;top:548px" width="112" height="17" viewBox="0 0 112 17"><rect x="10.5" y="5.9" width="92" height="6" fill="#c4c4c4" stroke="#111" stroke-width="1"/></svg>
<svg style="position:absolute;left:0;top:0" width="1299" height="677"><path d="M1001.6 308.6 L1043.3 308.6 L1043.3 412.6 L1001.6 412.6" fill="none" stroke="#111" stroke-width="3.8" stroke-linecap="round"/><path d="M1001.6 308.6 L1043.3 308.6 L1043.3 412.6 L1001.6 412.6" fill="none" stroke="#ff0000" stroke-width="2.0" stroke-linecap="round"/><path d="M1001.6 287.6 L1031 287.6 L1031 391.6 L1001.6 391.6" fill="none" stroke="#111" stroke-width="3.8" stroke-linecap="round"/><path d="M1001.6 287.6 L1031 287.6 L1031 391.6 L1001.6 391.6" fill="none" stroke="#ff0000" stroke-width="2.0" stroke-linecap="round"/><path d="M1001.6 267.6 L1018.5 267.6 L1018.5 370.6 L1001.6 370.6" fill="none" stroke="#111" stroke-width="3.8" stroke-linecap="round"/><path d="M1001.6 267.6 L1018.5 267.6 L1018.5 370.6 L1001.6 370.6" fill="none" stroke="#ff0000" stroke-width="2.0" stroke-linecap="round"/><path d="M1001.6 246.6 L1005.7 246.6 L1005.7 349.6 L1001.6 349.6" fill="none" stroke="#111" stroke-width="3.8" stroke-linecap="round"/><path d="M1001.6 246.6 L1005.7 246.6 L1005.7 349.6 L1001.6 349.6" fill="none" stroke="#ff0000" stroke-width="2.0" stroke-linecap="round"/><path d="M956 349.6 L956 474.6" stroke="#000" stroke-width="3.6"/><circle cx="956" cy="349.6" r="3.9" fill="#000"/><circle cx="956" cy="474.6" r="3.9" fill="#000"/><path d="M969 370.6 L969 495.6" stroke="#000" stroke-width="3.6"/><circle cx="969" cy="370.6" r="3.9" fill="#000"/><circle cx="969" cy="495.6" r="3.9" fill="#000"/><path d="M981 391.6 L981 515.6" stroke="#000" stroke-width="3.6"/><circle cx="981" cy="391.6" r="3.9" fill="#000"/><circle cx="981" cy="515.6" r="3.9" fill="#000"/></svg>
<div style="left:628px;top:606px;width:143px;height:35px;border:1px solid #adadad;background:linear-gradient(#f0f0f0,#e5e5e5);"></div>
<div class="t" style="left:393.5px;width:600px;text-align:center;top:616.25px;font-size:15.3px;color:#000;">S<span style="text-decoration:underline">o</span>rtieren</div>
<svg style="position:absolute;left:757px;top:621px" width="12" height="8"><path d="M1.5 1 L10 1 L5.75 5.6 Z" fill="#111"/></svg>
<div style="left:794px;top:606px;width:143px;height:35px;border:1px solid #3399ff;background:linear-gradient(#f0f0f0,#e5e5e5);"></div>
<div class="t" style="left:565.5px;width:600px;text-align:center;top:616.25px;font-size:15.3px;color:#000;">OK</div>
<div style="left:960px;top:606px;width:142px;height:35px;border:1px solid #adadad;background:linear-gradient(#f0f0f0,#e5e5e5);"></div>
<div class="t" style="left:731px;width:600px;text-align:center;top:616.25px;font-size:15.3px;color:#000;">Abbrechen</div>
<div style="left:1125px;top:606px;width:143px;height:35px;border:1px solid #d9d9d9;background:#f0f0f0;"></div>
<div class="t" style="left:896.5px;width:600px;text-align:center;top:616.25px;font-size:15.3px;color:#838383;">Übernehmen</div>
<div style="left:1282px;top:653px;width:3px;height:3px;background:#b8b8b8;"></div>
<div style="left:1278px;top:657px;width:3px;height:3px;background:#b8b8b8;"></div>
<div style="left:1282px;top:657px;width:3px;height:3px;background:#b8b8b8;"></div>
<div style="left:1274px;top:661px;width:3px;height:3px;background:#b8b8b8;"></div>
<div style="left:1278px;top:661px;width:3px;height:3px;background:#b8b8b8;"></div>
<div style="left:1282px;top:661px;width:3px;height:3px;background:#b8b8b8;"></div>
</body></html>
